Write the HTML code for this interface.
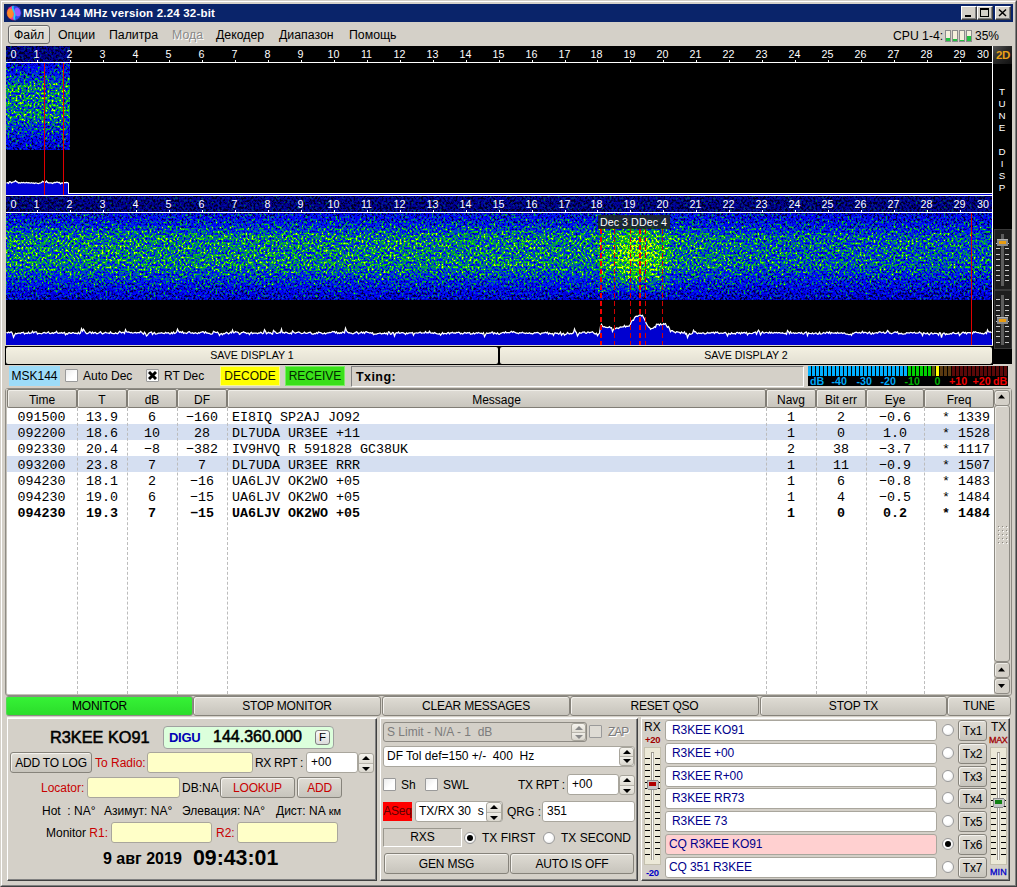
<!DOCTYPE html>
<html><head><meta charset="utf-8"><title>MSHV</title><style>
*{box-sizing:border-box;margin:0;padding:0}
html,body{width:1017px;height:887px;overflow:hidden}
body{background:#d4d0c8;font-family:"Liberation Sans",sans-serif;font-size:12px;color:#000;position:relative}
.a{position:absolute}
.t{position:absolute;white-space:nowrap;line-height:1}
.c{text-align:center}
.btn{position:absolute;letter-spacing:-.2px;border:1px solid #86837b;border-radius:3px;background:linear-gradient(#dfdcd4,#c7c4bc);text-align:center;white-space:nowrap;box-shadow:inset 1px 1px 0 #f4f2ee}
.inp{position:absolute;border:1px solid #a9a69d;border-radius:3px;background:#fff}
.yel{background:#ffffc8}
.red{color:#c80000}
.blu{color:#00008b}
.mono{font-family:"Liberation Mono",monospace;font-size:13.33px}
</style></head><body>
<div class="a" style="left:0;top:0;width:1017px;height:887px;border:1px solid #d4d0c8;border-right-color:#404040;border-bottom-color:#404040"></div>
<div class="a" style="left:1px;top:1px;width:1015px;height:885px;border:1px solid #fff;border-right-color:#808080;border-bottom-color:#808080"></div>
<div class="a" style="left:4px;top:4px;width:1009px;height:18px;background:#0a246a"></div>
<svg class="a" style="left:6px;top:5px" width="16" height="16" viewBox="0 0 16 16"><defs><clipPath id="ic"><circle cx="8" cy="7.9" r="7.5"/></clipPath></defs><g clip-path="url(#ic)"><rect width="16" height="16" fill="#ff2a9c"/><ellipse cx="4.2" cy="8.5" rx="3.4" ry="5" fill="#ff8a2a"/><path d="M7.5 0 C4 4 11 7 8.5 11 C7.5 13 9 16 10 16 L16 16 L16 0 Z" fill="#2a4cf0"/><path d="M7.5 0 C4 4 11 7 8.5 11 C7.5 13 9 16 10 16" fill="none" stroke="#28d0f0" stroke-width="1.8"/><ellipse cx="11.6" cy="7" rx="2.8" ry="4.4" fill="#9a58ff" transform="rotate(-15 11.6 7)"/></g><circle cx="8" cy="7.9" r="7.5" fill="none" stroke="#101848" stroke-width=".6"/></svg>
<div class="t" style="left:23px;top:8px;font-size:11.5px;letter-spacing:.19px;font-weight:bold;color:#fff">MSHV 144 MHz version 2.24 32-bit</div>
<div class="a" style="left:961px;top:6px;width:16px;height:14px;background:#d4d0c8;border:1px solid #fff;border-right-color:#404040;border-bottom-color:#404040;box-shadow:inset -1px -1px 0 #808080"></div>
<div class="a" style="left:977px;top:6px;width:16px;height:14px;background:#d4d0c8;border:1px solid #fff;border-right-color:#404040;border-bottom-color:#404040;box-shadow:inset -1px -1px 0 #808080"></div>
<div class="a" style="left:995px;top:6px;width:16px;height:14px;background:#d4d0c8;border:1px solid #fff;border-right-color:#404040;border-bottom-color:#404040;box-shadow:inset -1px -1px 0 #808080"></div>
<div class="a" style="left:965px;top:15px;width:6px;height:2px;background:#000"></div>
<div class="a" style="left:980px;top:8px;width:9px;height:9px;border:1px solid #000;border-top-width:2px"></div>
<svg class="a" style="left:998px;top:8px" width="10" height="9"><path d="M1 1.5 L8 8 M8 1.5 L1 8" stroke="#000" stroke-width="1.5"/></svg>
<div class="a" style="left:8px;top:25px;width:42px;height:19px;border:1px solid #6a6a6a;border-radius:3px;background:linear-gradient(#e4e1da,#d8d5cd);box-shadow:inset 1px 1px 0 #f0eee8"></div>
<div class="t mi" style="left:14px;top:29px;font-size:12.3px;">Файл</div>
<div class="t mi" style="left:58px;top:29px;font-size:12.3px;">Опции</div>
<div class="t mi" style="left:109px;top:29px;font-size:12.3px;">Палитра</div>
<div class="t mi" style="left:172px;top:29px;font-size:12.3px;color:#8a8a8a;text-shadow:1px 1px 0 #fff;">Мода</div>
<div class="t mi" style="left:216px;top:29px;font-size:12.3px;">Декодер</div>
<div class="t mi" style="left:279px;top:29px;font-size:12.3px;">Диапазон</div>
<div class="t mi" style="left:349px;top:29px;font-size:12.3px;">Помощь</div>
<div class="t" id="cpu" style="left:893px;top:30px;font-size:12.2px">CPU 1-4:</div>
<div class="a" style="left:945px;top:30px;width:6px;height:12px;border:1px solid #8c8c8c;background:#f4efdc"><div class="a" style="left:0;bottom:0;width:4px;height:3px;background:#22c040"></div></div>
<div class="a" style="left:952px;top:30px;width:6px;height:12px;border:1px solid #8c8c8c;background:#f4efdc"><div class="a" style="left:0;bottom:0;width:4px;height:2px;background:#22c040"></div></div>
<div class="a" style="left:959px;top:30px;width:6px;height:12px;border:1px solid #8c8c8c;background:#f4efdc"><div class="a" style="left:0;bottom:0;width:4px;height:1px;background:#22c040"></div></div>
<div class="a" style="left:966px;top:30px;width:6px;height:12px;border:1px solid #8c8c8c;background:#f4efdc"><div class="a" style="left:0;bottom:0;width:4px;height:5px;background:#22c040"></div></div>
<div class="t" style="left:975px;top:30px;font-size:12px">35%</div>
<svg class="a" style="left:0;top:0" width="1017" height="887" viewBox="0 0 1017 887" font-family="Liberation Sans, sans-serif" shape-rendering="crispEdges">
<defs>
<filter id="wf" x="0" y="0" width="100%" height="100%" color-interpolation-filters="sRGB">
<feTurbulence type="fractalNoise" baseFrequency="0.5 0.42" numOctaves="2" seed="7" result="n"/>
<feColorMatrix in="n" type="matrix" values="1.45 0 0 0 -0.225  1.45 0 0 0 -0.225  1.45 0 0 0 -0.225  0 0 0 0 1" result="g"/>
<feComposite in="SourceGraphic" in2="g" operator="arithmetic" k1="0" k2="1" k3="1" k4="-0.5" result="m"/>
<feColorMatrix in="m" type="matrix" values="1 0 0 0 0  1 0 0 0 0  1 0 0 0 0  0 0 0 0 1" result="mm"/>
<feComponentTransfer in="mm">
<feFuncR type="table" tableValues="0 0 0 0 0 0 0 0.05 0.35 0.8 1"/>
<feFuncG type="table" tableValues="0 0 0 0 0.05 0.34 0.62 0.82 0.93 1 1"/>
<feFuncB type="table" tableValues="0.2 0.48 0.78 0.97 1 0.75 0.25 0.02 0 0 0"/>
</feComponentTransfer>
</filter>
<linearGradient id="vg1" x1="0" y1="0" x2="0" y2="1">
<stop offset="0" stop-color="#484848"/><stop offset=".12" stop-color="#626262"/><stop offset=".28" stop-color="#8c8c8c"/><stop offset=".6" stop-color="#8c8c8c"/><stop offset=".8" stop-color="#646464"/><stop offset=".9" stop-color="#4c4c4c"/><stop offset="1" stop-color="#3a3a3a"/>
</linearGradient>
<linearGradient id="hg" x1="0" y1="0" x2="1" y2="0"><stop offset="0" stop-color="#000" stop-opacity="0"/><stop offset=".68" stop-color="#000" stop-opacity="0"/><stop offset=".78" stop-color="#000" stop-opacity=".1"/><stop offset="1" stop-color="#000" stop-opacity=".12"/></linearGradient>
<radialGradient id="hot" cx="0.5" cy="0.45" r="0.5"><stop offset="0" stop-color="#fff" stop-opacity=".42"/><stop offset=".5" stop-color="#fff" stop-opacity=".25"/><stop offset="1" stop-color="#fff" stop-opacity="0"/></radialGradient>
</defs>
<rect x="6" y="46" width="1006" height="318" fill="#000"/>
<g filter="url(#wf)"><rect x="6" y="46" width="64" height="16" fill="#343434"/><rect x="6" y="63" width="64" height="87" fill="url(#vg1)"/></g>
<rect x="6" y="46" width="64" height="16" fill="#000" fill-opacity=".35"/>
<text x="13.5" y="57.6" text-anchor="middle" font-size="10.7" fill="#fff">0</text>
<rect x="37" y="60" width="1" height="2" fill="#fff"/>
<text x="36.5" y="57.6" text-anchor="middle" font-size="10.7" fill="#fff">1</text>
<rect x="70" y="60" width="1" height="2" fill="#fff"/>
<text x="69.5" y="57.6" text-anchor="middle" font-size="10.7" fill="#fff">2</text>
<rect x="103" y="60" width="1" height="2" fill="#fff"/>
<text x="102.5" y="57.6" text-anchor="middle" font-size="10.7" fill="#fff">3</text>
<rect x="136" y="60" width="1" height="2" fill="#fff"/>
<text x="135.5" y="57.6" text-anchor="middle" font-size="10.7" fill="#fff">4</text>
<rect x="169" y="60" width="1" height="2" fill="#fff"/>
<text x="168.5" y="57.6" text-anchor="middle" font-size="10.7" fill="#fff">5</text>
<rect x="202" y="60" width="1" height="2" fill="#fff"/>
<text x="201.5" y="57.6" text-anchor="middle" font-size="10.7" fill="#fff">6</text>
<rect x="235" y="60" width="1" height="2" fill="#fff"/>
<text x="234.5" y="57.6" text-anchor="middle" font-size="10.7" fill="#fff">7</text>
<rect x="268" y="60" width="1" height="2" fill="#fff"/>
<text x="267.5" y="57.6" text-anchor="middle" font-size="10.7" fill="#fff">8</text>
<rect x="301" y="60" width="1" height="2" fill="#fff"/>
<text x="300.5" y="57.6" text-anchor="middle" font-size="10.7" fill="#fff">9</text>
<rect x="334" y="60" width="1" height="2" fill="#fff"/>
<text x="333.5" y="57.6" text-anchor="middle" font-size="10.7" fill="#fff">10</text>
<rect x="367" y="60" width="1" height="2" fill="#fff"/>
<text x="366.5" y="57.6" text-anchor="middle" font-size="10.7" fill="#fff">11</text>
<rect x="400" y="60" width="1" height="2" fill="#fff"/>
<text x="399.5" y="57.6" text-anchor="middle" font-size="10.7" fill="#fff">12</text>
<rect x="433" y="60" width="1" height="2" fill="#fff"/>
<text x="432.5" y="57.6" text-anchor="middle" font-size="10.7" fill="#fff">13</text>
<rect x="466" y="60" width="1" height="2" fill="#fff"/>
<text x="465.5" y="57.6" text-anchor="middle" font-size="10.7" fill="#fff">14</text>
<rect x="499" y="60" width="1" height="2" fill="#fff"/>
<text x="498.5" y="57.6" text-anchor="middle" font-size="10.7" fill="#fff">15</text>
<rect x="532" y="60" width="1" height="2" fill="#fff"/>
<text x="531.5" y="57.6" text-anchor="middle" font-size="10.7" fill="#fff">16</text>
<rect x="565" y="60" width="1" height="2" fill="#fff"/>
<text x="564.5" y="57.6" text-anchor="middle" font-size="10.7" fill="#fff">17</text>
<rect x="597" y="60" width="1" height="2" fill="#fff"/>
<text x="596.5" y="57.6" text-anchor="middle" font-size="10.7" fill="#fff">18</text>
<rect x="630" y="60" width="1" height="2" fill="#fff"/>
<text x="629.5" y="57.6" text-anchor="middle" font-size="10.7" fill="#fff">19</text>
<rect x="663" y="60" width="1" height="2" fill="#fff"/>
<text x="662.5" y="57.6" text-anchor="middle" font-size="10.7" fill="#fff">20</text>
<rect x="696" y="60" width="1" height="2" fill="#fff"/>
<text x="695.5" y="57.6" text-anchor="middle" font-size="10.7" fill="#fff">21</text>
<rect x="729" y="60" width="1" height="2" fill="#fff"/>
<text x="728.5" y="57.6" text-anchor="middle" font-size="10.7" fill="#fff">22</text>
<rect x="762" y="60" width="1" height="2" fill="#fff"/>
<text x="761.5" y="57.6" text-anchor="middle" font-size="10.7" fill="#fff">23</text>
<rect x="795" y="60" width="1" height="2" fill="#fff"/>
<text x="794.5" y="57.6" text-anchor="middle" font-size="10.7" fill="#fff">24</text>
<rect x="828" y="60" width="1" height="2" fill="#fff"/>
<text x="827.5" y="57.6" text-anchor="middle" font-size="10.7" fill="#fff">25</text>
<rect x="861" y="60" width="1" height="2" fill="#fff"/>
<text x="860.5" y="57.6" text-anchor="middle" font-size="10.7" fill="#fff">26</text>
<rect x="894" y="60" width="1" height="2" fill="#fff"/>
<text x="893.5" y="57.6" text-anchor="middle" font-size="10.7" fill="#fff">27</text>
<rect x="927" y="60" width="1" height="2" fill="#fff"/>
<text x="926.5" y="57.6" text-anchor="middle" font-size="10.7" fill="#fff">28</text>
<rect x="960" y="60" width="1" height="2" fill="#fff"/>
<text x="959.5" y="57.6" text-anchor="middle" font-size="10.7" fill="#fff">29</text>
<text x="983" y="57.6" text-anchor="middle" font-size="10.7" fill="#fff">30</text>
<rect x="6" y="62" width="986" height="1" fill="#fff"/>
<path d="M6 195 L6 182.8 L7 182.7 L8 183.4 L9 181.7 L10 181.8 L11 183.0 L12 182.2 L13 181.8 L14 181.6 L15 180.6 L16 181.7 L17 182.1 L18 183.0 L19 182.7 L20 183.0 L21 182.5 L22 182.8 L23 182.5 L24 182.8 L25 182.9 L26 182.4 L27 182.9 L28 182.6 L29 182.9 L30 183.2 L31 182.7 L32 183.2 L33 182.9 L34 183.5 L35 182.9 L36 183.0 L37 183.4 L38 183.5 L39 183.2 L40 183.0 L41 182.6 L42 181.3 L43 181.7 L44 182.2 L45 182.4 L46 181.1 L47 182.4 L48 182.9 L49 182.9 L50 182.9 L51 182.9 L52 183.5 L53 182.8 L54 182.4 L55 182.6 L56 182.2 L57 182.1 L58 182.6 L59 182.5 L60 183.9 L61 183.1 L62 182.8 L63 183.1 L64 182.7 L65 182.6 L66 182.5 L67 182.6 L69 183 L69 195 Z" fill="#0000d4"/>
<path d="M6.5 182.8 L7.5 182.7 L8.5 183.4 L9.5 181.7 L10.5 181.8 L11.5 183.0 L12.5 182.2 L13.5 181.8 L14.5 181.6 L15.5 180.6 L16.5 181.7 L17.5 182.1 L18.5 183.0 L19.5 182.7 L20.5 183.0 L21.5 182.5 L22.5 182.8 L23.5 182.5 L24.5 182.8 L25.5 182.9 L26.5 182.4 L27.5 182.9 L28.5 182.6 L29.5 182.9 L30.5 183.2 L31.5 182.7 L32.5 183.2 L33.5 182.9 L34.5 183.5 L35.5 182.9 L36.5 183.0 L37.5 183.4 L38.5 183.5 L39.5 183.2 L40.5 183.0 L41.5 182.6 L42.5 181.3 L43.5 181.7 L44.5 182.2 L45.5 182.4 L46.5 181.1 L47.5 182.4 L48.5 182.9 L49.5 182.9 L50.5 182.9 L51.5 182.9 L52.5 183.5 L53.5 182.8 L54.5 182.4 L55.5 182.6 L56.5 182.2 L57.5 182.1 L58.5 182.6 L59.5 182.5 L60.5 183.9 L61.5 183.1 L62.5 182.8 L63.5 183.1 L64.5 182.7 L65.5 182.6 L66.5 182.5 L67.5 182.6 L68.5 183" fill="none" stroke="#fff" stroke-width="1.25" shape-rendering="auto"/>
<rect x="68" y="183" width="1" height="11" fill="#fff"/><rect x="68" y="193" width="924" height="1" fill="#fff"/>
<rect x="6" y="194" width="986" height="1" fill="#0000d4"/>
<rect x="44" y="63" width="1" height="132" fill="#e00000"/><rect x="63" y="63" width="1" height="132" fill="#e00000"/>
<rect x="6" y="195" width="986" height="1" fill="#fff"/>
<rect x="992" y="46" width="1" height="300" fill="#fff"/>
<g filter="url(#wf)"><rect x="6" y="196" width="986" height="16" fill="#343434"/><rect x="6" y="213" width="986" height="87" fill="url(#vg1)"/><rect x="6" y="213" width="986" height="87" fill="url(#hg)"/><rect x="599" y="228" width="71" height="64" fill="#fff" fill-opacity=".16"/><rect x="604" y="226" width="66" height="68" fill="url(#hot)"/></g>
<rect x="6" y="196" width="986" height="16" fill="#000" fill-opacity=".35"/>
<text x="13.5" y="207.6" text-anchor="middle" font-size="10.7" fill="#fff">0</text>
<rect x="37" y="210" width="1" height="2" fill="#fff"/>
<text x="36.5" y="207.6" text-anchor="middle" font-size="10.7" fill="#fff">1</text>
<rect x="70" y="210" width="1" height="2" fill="#fff"/>
<text x="69.5" y="207.6" text-anchor="middle" font-size="10.7" fill="#fff">2</text>
<rect x="103" y="210" width="1" height="2" fill="#fff"/>
<text x="102.5" y="207.6" text-anchor="middle" font-size="10.7" fill="#fff">3</text>
<rect x="136" y="210" width="1" height="2" fill="#fff"/>
<text x="135.5" y="207.6" text-anchor="middle" font-size="10.7" fill="#fff">4</text>
<rect x="169" y="210" width="1" height="2" fill="#fff"/>
<text x="168.5" y="207.6" text-anchor="middle" font-size="10.7" fill="#fff">5</text>
<rect x="202" y="210" width="1" height="2" fill="#fff"/>
<text x="201.5" y="207.6" text-anchor="middle" font-size="10.7" fill="#fff">6</text>
<rect x="235" y="210" width="1" height="2" fill="#fff"/>
<text x="234.5" y="207.6" text-anchor="middle" font-size="10.7" fill="#fff">7</text>
<rect x="268" y="210" width="1" height="2" fill="#fff"/>
<text x="267.5" y="207.6" text-anchor="middle" font-size="10.7" fill="#fff">8</text>
<rect x="301" y="210" width="1" height="2" fill="#fff"/>
<text x="300.5" y="207.6" text-anchor="middle" font-size="10.7" fill="#fff">9</text>
<rect x="334" y="210" width="1" height="2" fill="#fff"/>
<text x="333.5" y="207.6" text-anchor="middle" font-size="10.7" fill="#fff">10</text>
<rect x="367" y="210" width="1" height="2" fill="#fff"/>
<text x="366.5" y="207.6" text-anchor="middle" font-size="10.7" fill="#fff">11</text>
<rect x="400" y="210" width="1" height="2" fill="#fff"/>
<text x="399.5" y="207.6" text-anchor="middle" font-size="10.7" fill="#fff">12</text>
<rect x="433" y="210" width="1" height="2" fill="#fff"/>
<text x="432.5" y="207.6" text-anchor="middle" font-size="10.7" fill="#fff">13</text>
<rect x="466" y="210" width="1" height="2" fill="#fff"/>
<text x="465.5" y="207.6" text-anchor="middle" font-size="10.7" fill="#fff">14</text>
<rect x="499" y="210" width="1" height="2" fill="#fff"/>
<text x="498.5" y="207.6" text-anchor="middle" font-size="10.7" fill="#fff">15</text>
<rect x="532" y="210" width="1" height="2" fill="#fff"/>
<text x="531.5" y="207.6" text-anchor="middle" font-size="10.7" fill="#fff">16</text>
<rect x="565" y="210" width="1" height="2" fill="#fff"/>
<text x="564.5" y="207.6" text-anchor="middle" font-size="10.7" fill="#fff">17</text>
<rect x="597" y="210" width="1" height="2" fill="#fff"/>
<text x="596.5" y="207.6" text-anchor="middle" font-size="10.7" fill="#fff">18</text>
<rect x="630" y="210" width="1" height="2" fill="#fff"/>
<text x="629.5" y="207.6" text-anchor="middle" font-size="10.7" fill="#fff">19</text>
<rect x="663" y="210" width="1" height="2" fill="#fff"/>
<text x="662.5" y="207.6" text-anchor="middle" font-size="10.7" fill="#fff">20</text>
<rect x="696" y="210" width="1" height="2" fill="#fff"/>
<text x="695.5" y="207.6" text-anchor="middle" font-size="10.7" fill="#fff">21</text>
<rect x="729" y="210" width="1" height="2" fill="#fff"/>
<text x="728.5" y="207.6" text-anchor="middle" font-size="10.7" fill="#fff">22</text>
<rect x="762" y="210" width="1" height="2" fill="#fff"/>
<text x="761.5" y="207.6" text-anchor="middle" font-size="10.7" fill="#fff">23</text>
<rect x="795" y="210" width="1" height="2" fill="#fff"/>
<text x="794.5" y="207.6" text-anchor="middle" font-size="10.7" fill="#fff">24</text>
<rect x="828" y="210" width="1" height="2" fill="#fff"/>
<text x="827.5" y="207.6" text-anchor="middle" font-size="10.7" fill="#fff">25</text>
<rect x="861" y="210" width="1" height="2" fill="#fff"/>
<text x="860.5" y="207.6" text-anchor="middle" font-size="10.7" fill="#fff">26</text>
<rect x="894" y="210" width="1" height="2" fill="#fff"/>
<text x="893.5" y="207.6" text-anchor="middle" font-size="10.7" fill="#fff">27</text>
<rect x="927" y="210" width="1" height="2" fill="#fff"/>
<text x="926.5" y="207.6" text-anchor="middle" font-size="10.7" fill="#fff">28</text>
<rect x="960" y="210" width="1" height="2" fill="#fff"/>
<text x="959.5" y="207.6" text-anchor="middle" font-size="10.7" fill="#fff">29</text>
<text x="983" y="207.6" text-anchor="middle" font-size="10.7" fill="#fff">30</text>
<rect x="6" y="212" width="986" height="1" fill="#fff"/>
<path d="M6 345 L6 332.2 L7 333.0 L8 332.1 L9 332.7 L10 332.1 L11 331.9 L12 333.7 L13 337.2 L14 335.2 L15 333.4 L16 333.9 L17 333.4 L18 333.1 L19 333.2 L20 333.5 L21 332.5 L22 332.5 L23 332.2 L24 334.0 L25 333.3 L26 333.2 L27 333.6 L28 332.1 L29 333.5 L30 333.2 L31 333.0 L32 331.2 L33 332.8 L34 332.2 L35 331.9 L36 331.8 L37 334.1 L38 333.3 L39 333.4 L40 333.5 L41 333.9 L42 333.2 L43 332.7 L44 332.5 L45 333.1 L46 333.2 L47 332.5 L48 331.8 L49 333.5 L50 333.6 L51 333.1 L52 332.8 L53 333.4 L54 332.7 L55 332.7 L56 331.3 L57 333.0 L58 333.3 L59 332.8 L60 333.1 L61 332.6 L62 333.3 L63 332.9 L64 332.4 L65 334.8 L66 333.6 L67 334.2 L68 332.9 L69 332.7 L70 333.3 L71 333.3 L72 332.7 L73 332.6 L74 333.4 L75 333.2 L76 333.3 L77 333.7 L78 332.3 L79 333.8 L80 332.9 L81 328.8 L82 331.1 L83 329.2 L84 330.8 L85 332.5 L86 333.6 L87 333.6 L88 333.1 L89 332.0 L90 332.1 L91 333.5 L92 332.1 L93 333.3 L94 332.6 L95 332.4 L96 333.7 L97 333.7 L98 333.1 L99 332.4 L100 331.6 L101 333.1 L102 333.9 L103 333.4 L104 332.9 L105 332.2 L106 332.8 L107 333.0 L108 333.1 L109 333.4 L110 331.8 L111 333.1 L112 333.3 L113 333.7 L114 333.7 L115 332.8 L116 333.4 L117 333.7 L118 332.8 L119 331.4 L120 332.0 L121 332.9 L122 332.4 L123 332.3 L124 333.5 L125 329.7 L126 331.8 L127 332.2 L128 331.9 L129 332.3 L130 332.9 L131 332.4 L132 333.2 L133 333.0 L134 332.6 L135 332.4 L136 333.0 L137 332.6 L138 332.7 L139 332.9 L140 331.4 L141 332.1 L142 333.4 L143 334.2 L144 332.2 L145 333.5 L146 336.0 L147 335.2 L148 333.4 L149 332.8 L150 332.3 L151 332.0 L152 334.5 L153 333.2 L154 332.4 L155 334.1 L156 334.0 L157 333.6 L158 333.0 L159 333.0 L160 333.1 L161 332.7 L162 333.1 L163 333.3 L164 333.6 L165 332.3 L166 333.1 L167 332.9 L168 332.7 L169 333.9 L170 333.8 L171 332.5 L172 333.7 L173 332.0 L174 333.5 L175 333.0 L176 332.2 L177 329.2 L178 331.2 L179 332.4 L180 331.8 L181 332.7 L182 331.5 L183 333.4 L184 332.8 L185 333.0 L186 333.6 L187 332.7 L188 331.8 L189 331.6 L190 333.0 L191 333.1 L192 332.7 L193 333.5 L194 333.1 L195 332.7 L196 333.2 L197 333.8 L198 332.6 L199 333.3 L200 332.4 L201 332.1 L202 331.7 L203 331.8 L204 333.2 L205 331.7 L206 333.0 L207 332.8 L208 333.3 L209 333.4 L210 334.2 L211 334.1 L212 333.8 L213 331.3 L214 331.9 L215 332.4 L216 332.6 L217 332.0 L218 333.3 L219 335.4 L220 334.0 L221 333.6 L222 334.7 L223 333.4 L224 333.8 L225 333.0 L226 332.2 L227 332.9 L228 334.0 L229 333.4 L230 332.1 L231 333.0 L232 330.1 L233 332.8 L234 332.6 L235 331.6 L236 332.0 L237 332.2 L238 332.7 L239 334.4 L240 333.7 L241 332.6 L242 332.5 L243 331.8 L244 332.6 L245 332.6 L246 333.5 L247 333.2 L248 333.2 L249 334.6 L250 333.0 L251 332.3 L252 333.7 L253 333.2 L254 333.2 L255 333.0 L256 333.0 L257 333.7 L258 333.0 L259 333.2 L260 332.3 L261 332.6 L262 333.8 L263 333.2 L264 329.8 L265 331.4 L266 333.8 L267 333.0 L268 332.3 L269 333.1 L270 332.7 L271 333.7 L272 334.1 L273 330.5 L274 331.5 L275 332.1 L276 333.3 L277 333.3 L278 333.0 L279 332.4 L280 332.7 L281 329.1 L282 332.8 L283 332.5 L284 333.2 L285 332.2 L286 332.3 L287 332.9 L288 333.5 L289 333.6 L290 333.1 L291 333.9 L292 331.0 L293 332.0 L294 332.7 L295 333.2 L296 332.6 L297 332.4 L298 332.0 L299 332.4 L300 333.0 L301 333.5 L302 333.3 L303 333.0 L304 332.2 L305 333.2 L306 333.3 L307 333.2 L308 332.6 L309 332.4 L310 332.2 L311 333.7 L312 334.1 L313 334.1 L314 333.5 L315 333.8 L316 332.6 L317 333.6 L318 332.1 L319 332.4 L320 332.6 L321 333.1 L322 333.8 L323 333.7 L324 332.9 L325 334.0 L326 333.2 L327 332.8 L328 332.8 L329 332.4 L330 332.7 L331 332.3 L332 331.4 L333 331.9 L334 331.6 L335 333.0 L336 331.8 L337 333.5 L338 332.8 L339 333.4 L340 332.8 L341 333.2 L342 331.9 L343 332.3 L344 332.9 L345 328.2 L346 330.8 L347 332.1 L348 332.8 L349 332.7 L350 333.2 L351 333.2 L352 333.9 L353 333.7 L354 332.9 L355 332.6 L356 331.8 L357 332.5 L358 333.8 L359 333.0 L360 332.8 L361 331.9 L362 333.1 L363 332.2 L364 333.4 L365 331.9 L366 331.7 L367 332.4 L368 332.5 L369 333.0 L370 332.7 L371 333.2 L372 332.6 L373 334.6 L374 334.2 L375 334.0 L376 334.0 L377 333.6 L378 333.5 L379 333.2 L380 333.2 L381 334.1 L382 333.5 L383 333.7 L384 332.9 L385 333.7 L386 333.1 L387 334.4 L388 331.8 L389 332.2 L390 334.3 L391 333.9 L392 332.5 L393 332.7 L394 336.0 L395 333.5 L396 332.7 L397 333.1 L398 332.0 L399 333.3 L400 333.2 L401 332.7 L402 332.7 L403 332.9 L404 333.4 L405 334.5 L406 332.9 L407 333.7 L408 333.1 L409 332.8 L410 332.8 L411 332.9 L412 332.5 L413 335.2 L414 333.3 L415 333.0 L416 332.9 L417 333.2 L418 332.9 L419 332.4 L420 332.2 L421 333.2 L422 333.0 L423 332.9 L424 333.0 L425 331.5 L426 332.8 L427 332.7 L428 332.9 L429 331.3 L430 332.9 L431 333.2 L432 332.9 L433 333.4 L434 332.5 L435 333.1 L436 333.7 L437 333.9 L438 334.0 L439 333.5 L440 335.1 L441 334.0 L442 332.6 L443 333.9 L444 333.4 L445 333.5 L446 334.0 L447 332.8 L448 332.5 L449 333.9 L450 332.8 L451 332.8 L452 332.2 L453 333.1 L454 332.9 L455 333.3 L456 332.5 L457 332.7 L458 332.1 L459 332.6 L460 333.9 L461 333.3 L462 334.0 L463 333.5 L464 332.5 L465 332.9 L466 333.3 L467 332.7 L468 332.9 L469 332.5 L470 334.2 L471 333.9 L472 333.8 L473 332.9 L474 334.0 L475 333.3 L476 332.8 L477 333.3 L478 332.4 L479 333.0 L480 333.4 L481 333.1 L482 333.8 L483 332.7 L484 336.6 L485 334.7 L486 333.0 L487 333.3 L488 333.3 L489 333.0 L490 333.2 L491 332.4 L492 332.0 L493 333.9 L494 332.8 L495 333.2 L496 333.9 L497 332.7 L498 334.1 L499 334.4 L500 333.3 L501 333.2 L502 332.5 L503 332.4 L504 333.2 L505 331.7 L506 332.9 L507 332.6 L508 332.6 L509 332.9 L510 332.1 L511 331.4 L512 332.4 L513 331.5 L514 332.2 L515 332.6 L516 333.1 L517 333.2 L518 333.7 L519 332.6 L520 332.9 L521 332.8 L522 332.2 L523 333.0 L524 333.1 L525 333.6 L526 333.0 L527 333.3 L528 333.4 L529 332.8 L530 333.5 L531 333.4 L532 334.0 L533 333.4 L534 332.6 L535 332.8 L536 332.6 L537 332.4 L538 332.7 L539 333.6 L540 334.3 L541 333.1 L542 333.2 L543 332.8 L544 332.8 L545 332.2 L546 333.0 L547 332.2 L548 334.2 L549 333.1 L550 333.7 L551 333.9 L552 333.5 L553 335.4 L554 333.1 L555 332.9 L556 333.4 L557 333.1 L558 334.2 L559 333.6 L560 332.1 L561 335.1 L562 333.8 L563 333.3 L564 335.2 L565 334.3 L566 334.0 L567 332.5 L568 333.4 L569 334.1 L570 333.4 L571 333.8 L572 333.4 L573 332.6 L574 328.9 L575 331.4 L576 332.8 L577 336.0 L578 334.2 L579 332.6 L580 333.2 L581 333.1 L582 332.1 L583 332.2 L584 331.9 L585 333.1 L586 333.3 L587 332.0 L588 332.0 L589 332.7 L590 332.4 L591 332.1 L592 331.7 L593 332.8 L594 333.7 L595 334.0 L596 333.3 L597 335.6 L598 334.1 L599 333.1 L600 326.4 L601 324.3 L602 326.2 L603 326.9 L604 326.6 L605 327.3 L606 327.3 L607 327.6 L608 327.4 L609 326.7 L610 327.8 L611 327.7 L612 331.5 L613 329.5 L614 328.6 L615 328.6 L616 328.0 L617 328.2 L618 328.5 L619 327.5 L620 326.9 L621 327.0 L622 326.8 L623 326.8 L624 325.4 L625 327.0 L626 326.2 L627 326.4 L628 326.2 L629 326.0 L630 324.0 L631 321.4 L632 320.2 L633 320.3 L634 317.8 L635 316.5 L636 316.2 L637 316.4 L638 315.8 L639 315.2 L640 315.1 L641 315.9 L642 315.3 L643 317.4 L644 319.2 L645 321.4 L646 323.9 L647 325.5 L648 327.0 L649 327.3 L650 329.3 L651 328.5 L652 328.3 L653 327.9 L654 326.7 L655 327.3 L656 324.2 L657 324.4 L658 324.2 L659 325.5 L660 323.8 L661 324.8 L662 325.2 L663 323.7 L664 324.3 L665 323.6 L666 325.9 L667 327.3 L668 326.5 L669 328.7 L670 331.8 L671 330.7 L672 330.7 L673 331.7 L674 332.0 L675 332.9 L676 331.6 L677 331.8 L678 332.2 L679 332.3 L680 333.4 L681 331.9 L682 333.0 L683 333.1 L684 331.9 L685 334.1 L686 333.5 L687 337.5 L688 335.2 L689 333.7 L690 334.3 L691 334.0 L692 333.4 L693 330.2 L694 331.8 L695 331.7 L696 333.1 L697 333.8 L698 332.9 L699 333.4 L700 333.1 L701 333.5 L702 332.8 L703 332.9 L704 333.8 L705 333.9 L706 333.4 L707 332.4 L708 333.0 L709 332.8 L710 333.1 L711 332.4 L712 332.7 L713 332.3 L714 333.5 L715 332.1 L716 332.5 L717 332.0 L718 333.1 L719 333.5 L720 333.2 L721 333.2 L722 333.4 L723 333.1 L724 332.6 L725 332.4 L726 333.8 L727 336.0 L728 333.4 L729 333.8 L730 334.3 L731 332.7 L732 333.5 L733 333.5 L734 333.3 L735 334.1 L736 332.5 L737 332.4 L738 333.3 L739 332.6 L740 334.0 L741 332.5 L742 333.2 L743 332.7 L744 332.4 L745 333.2 L746 332.3 L747 334.9 L748 333.5 L749 333.1 L750 333.5 L751 333.6 L752 333.4 L753 332.5 L754 332.3 L755 332.0 L756 334.1 L757 331.7 L758 330.2 L759 331.7 L760 334.8 L761 333.1 L762 331.7 L763 332.9 L764 333.0 L765 332.5 L766 332.3 L767 332.8 L768 333.3 L769 332.0 L770 333.1 L771 332.4 L772 333.2 L773 333.1 L774 332.5 L775 332.8 L776 332.4 L777 333.0 L778 332.6 L779 332.6 L780 333.2 L781 333.2 L782 332.8 L783 333.3 L784 333.7 L785 333.3 L786 334.3 L787 330.6 L788 331.8 L789 333.6 L790 331.7 L791 333.3 L792 333.0 L793 332.6 L794 333.4 L795 332.9 L796 333.4 L797 333.1 L798 332.7 L799 332.6 L800 333.4 L801 332.4 L802 333.8 L803 334.1 L804 333.0 L805 332.4 L806 332.1 L807 335.6 L808 332.9 L809 333.3 L810 333.5 L811 333.8 L812 332.8 L813 333.9 L814 333.5 L815 332.9 L816 333.1 L817 334.3 L818 333.9 L819 332.2 L820 334.0 L821 333.8 L822 333.5 L823 332.5 L824 333.0 L825 333.5 L826 332.1 L827 332.3 L828 333.2 L829 331.8 L830 333.6 L831 332.5 L832 333.0 L833 333.1 L834 333.2 L835 332.8 L836 333.5 L837 332.4 L838 333.3 L839 333.0 L840 333.0 L841 332.6 L842 333.5 L843 333.2 L844 332.9 L845 333.9 L846 334.0 L847 334.0 L848 334.5 L849 334.5 L850 334.2 L851 335.4 L852 333.3 L853 333.5 L854 332.7 L855 332.4 L856 332.1 L857 332.9 L858 332.8 L859 332.5 L860 333.2 L861 332.7 L862 331.4 L863 333.0 L864 332.4 L865 332.4 L866 332.7 L867 333.6 L868 332.8 L869 332.0 L870 333.7 L871 334.2 L872 332.7 L873 333.9 L874 333.0 L875 332.9 L876 332.6 L877 333.3 L878 332.3 L879 331.6 L880 332.0 L881 332.8 L882 332.5 L883 332.1 L884 333.4 L885 333.1 L886 332.3 L887 330.6 L888 331.5 L889 333.1 L890 333.2 L891 333.7 L892 333.2 L893 332.8 L894 332.2 L895 332.0 L896 332.6 L897 331.7 L898 333.9 L899 333.4 L900 333.7 L901 333.3 L902 334.0 L903 334.0 L904 333.9 L905 333.9 L906 332.7 L907 332.9 L908 332.8 L909 333.0 L910 332.3 L911 332.5 L912 333.1 L913 332.7 L914 332.2 L915 333.3 L916 333.0 L917 333.0 L918 332.9 L919 331.9 L920 333.0 L921 333.1 L922 335.6 L923 332.8 L924 333.1 L925 333.8 L926 333.6 L927 332.9 L928 334.2 L929 334.8 L930 333.2 L931 332.7 L932 333.9 L933 333.9 L934 333.1 L935 333.3 L936 333.4 L937 333.7 L938 335.1 L939 332.7 L940 333.0 L941 337.5 L942 334.1 L943 333.2 L944 333.1 L945 334.7 L946 333.8 L947 334.3 L948 334.2 L949 334.1 L950 333.5 L951 334.0 L952 332.9 L953 332.5 L954 333.4 L955 333.5 L956 333.5 L957 333.2 L958 332.5 L959 335.5 L960 334.1 L961 333.5 L962 332.4 L963 332.2 L964 333.1 L965 332.4 L966 333.9 L967 332.6 L968 332.7 L969 332.6 L970 333.1 L971 332.4 L972 333.7 L973 331.8 L974 332.4 L975 331.8 L976 332.5 L977 332.6 L978 332.7 L979 333.2 L980 333.0 L981 333.7 L982 333.5 L983 334.1 L984 333.6 L985 332.4 L986 333.5 L987 329.9 L988 331.7 L989 332.1 L990 331.9 L991 332.9 L992 345 Z" fill="#0000d0"/>
<path d="M6.5 332.2 L7.5 333.0 L8.5 332.1 L9.5 332.7 L10.5 332.1 L11.5 331.9 L12.5 333.7 L13.5 337.2 L14.5 335.2 L15.5 333.4 L16.5 333.9 L17.5 333.4 L18.5 333.1 L19.5 333.2 L20.5 333.5 L21.5 332.5 L22.5 332.5 L23.5 332.2 L24.5 334.0 L25.5 333.3 L26.5 333.2 L27.5 333.6 L28.5 332.1 L29.5 333.5 L30.5 333.2 L31.5 333.0 L32.5 331.2 L33.5 332.8 L34.5 332.2 L35.5 331.9 L36.5 331.8 L37.5 334.1 L38.5 333.3 L39.5 333.4 L40.5 333.5 L41.5 333.9 L42.5 333.2 L43.5 332.7 L44.5 332.5 L45.5 333.1 L46.5 333.2 L47.5 332.5 L48.5 331.8 L49.5 333.5 L50.5 333.6 L51.5 333.1 L52.5 332.8 L53.5 333.4 L54.5 332.7 L55.5 332.7 L56.5 331.3 L57.5 333.0 L58.5 333.3 L59.5 332.8 L60.5 333.1 L61.5 332.6 L62.5 333.3 L63.5 332.9 L64.5 332.4 L65.5 334.8 L66.5 333.6 L67.5 334.2 L68.5 332.9 L69.5 332.7 L70.5 333.3 L71.5 333.3 L72.5 332.7 L73.5 332.6 L74.5 333.4 L75.5 333.2 L76.5 333.3 L77.5 333.7 L78.5 332.3 L79.5 333.8 L80.5 332.9 L81.5 328.8 L82.5 331.1 L83.5 329.2 L84.5 330.8 L85.5 332.5 L86.5 333.6 L87.5 333.6 L88.5 333.1 L89.5 332.0 L90.5 332.1 L91.5 333.5 L92.5 332.1 L93.5 333.3 L94.5 332.6 L95.5 332.4 L96.5 333.7 L97.5 333.7 L98.5 333.1 L99.5 332.4 L100.5 331.6 L101.5 333.1 L102.5 333.9 L103.5 333.4 L104.5 332.9 L105.5 332.2 L106.5 332.8 L107.5 333.0 L108.5 333.1 L109.5 333.4 L110.5 331.8 L111.5 333.1 L112.5 333.3 L113.5 333.7 L114.5 333.7 L115.5 332.8 L116.5 333.4 L117.5 333.7 L118.5 332.8 L119.5 331.4 L120.5 332.0 L121.5 332.9 L122.5 332.4 L123.5 332.3 L124.5 333.5 L125.5 329.7 L126.5 331.8 L127.5 332.2 L128.5 331.9 L129.5 332.3 L130.5 332.9 L131.5 332.4 L132.5 333.2 L133.5 333.0 L134.5 332.6 L135.5 332.4 L136.5 333.0 L137.5 332.6 L138.5 332.7 L139.5 332.9 L140.5 331.4 L141.5 332.1 L142.5 333.4 L143.5 334.2 L144.5 332.2 L145.5 333.5 L146.5 336.0 L147.5 335.2 L148.5 333.4 L149.5 332.8 L150.5 332.3 L151.5 332.0 L152.5 334.5 L153.5 333.2 L154.5 332.4 L155.5 334.1 L156.5 334.0 L157.5 333.6 L158.5 333.0 L159.5 333.0 L160.5 333.1 L161.5 332.7 L162.5 333.1 L163.5 333.3 L164.5 333.6 L165.5 332.3 L166.5 333.1 L167.5 332.9 L168.5 332.7 L169.5 333.9 L170.5 333.8 L171.5 332.5 L172.5 333.7 L173.5 332.0 L174.5 333.5 L175.5 333.0 L176.5 332.2 L177.5 329.2 L178.5 331.2 L179.5 332.4 L180.5 331.8 L181.5 332.7 L182.5 331.5 L183.5 333.4 L184.5 332.8 L185.5 333.0 L186.5 333.6 L187.5 332.7 L188.5 331.8 L189.5 331.6 L190.5 333.0 L191.5 333.1 L192.5 332.7 L193.5 333.5 L194.5 333.1 L195.5 332.7 L196.5 333.2 L197.5 333.8 L198.5 332.6 L199.5 333.3 L200.5 332.4 L201.5 332.1 L202.5 331.7 L203.5 331.8 L204.5 333.2 L205.5 331.7 L206.5 333.0 L207.5 332.8 L208.5 333.3 L209.5 333.4 L210.5 334.2 L211.5 334.1 L212.5 333.8 L213.5 331.3 L214.5 331.9 L215.5 332.4 L216.5 332.6 L217.5 332.0 L218.5 333.3 L219.5 335.4 L220.5 334.0 L221.5 333.6 L222.5 334.7 L223.5 333.4 L224.5 333.8 L225.5 333.0 L226.5 332.2 L227.5 332.9 L228.5 334.0 L229.5 333.4 L230.5 332.1 L231.5 333.0 L232.5 330.1 L233.5 332.8 L234.5 332.6 L235.5 331.6 L236.5 332.0 L237.5 332.2 L238.5 332.7 L239.5 334.4 L240.5 333.7 L241.5 332.6 L242.5 332.5 L243.5 331.8 L244.5 332.6 L245.5 332.6 L246.5 333.5 L247.5 333.2 L248.5 333.2 L249.5 334.6 L250.5 333.0 L251.5 332.3 L252.5 333.7 L253.5 333.2 L254.5 333.2 L255.5 333.0 L256.5 333.0 L257.5 333.7 L258.5 333.0 L259.5 333.2 L260.5 332.3 L261.5 332.6 L262.5 333.8 L263.5 333.2 L264.5 329.8 L265.5 331.4 L266.5 333.8 L267.5 333.0 L268.5 332.3 L269.5 333.1 L270.5 332.7 L271.5 333.7 L272.5 334.1 L273.5 330.5 L274.5 331.5 L275.5 332.1 L276.5 333.3 L277.5 333.3 L278.5 333.0 L279.5 332.4 L280.5 332.7 L281.5 329.1 L282.5 332.8 L283.5 332.5 L284.5 333.2 L285.5 332.2 L286.5 332.3 L287.5 332.9 L288.5 333.5 L289.5 333.6 L290.5 333.1 L291.5 333.9 L292.5 331.0 L293.5 332.0 L294.5 332.7 L295.5 333.2 L296.5 332.6 L297.5 332.4 L298.5 332.0 L299.5 332.4 L300.5 333.0 L301.5 333.5 L302.5 333.3 L303.5 333.0 L304.5 332.2 L305.5 333.2 L306.5 333.3 L307.5 333.2 L308.5 332.6 L309.5 332.4 L310.5 332.2 L311.5 333.7 L312.5 334.1 L313.5 334.1 L314.5 333.5 L315.5 333.8 L316.5 332.6 L317.5 333.6 L318.5 332.1 L319.5 332.4 L320.5 332.6 L321.5 333.1 L322.5 333.8 L323.5 333.7 L324.5 332.9 L325.5 334.0 L326.5 333.2 L327.5 332.8 L328.5 332.8 L329.5 332.4 L330.5 332.7 L331.5 332.3 L332.5 331.4 L333.5 331.9 L334.5 331.6 L335.5 333.0 L336.5 331.8 L337.5 333.5 L338.5 332.8 L339.5 333.4 L340.5 332.8 L341.5 333.2 L342.5 331.9 L343.5 332.3 L344.5 332.9 L345.5 328.2 L346.5 330.8 L347.5 332.1 L348.5 332.8 L349.5 332.7 L350.5 333.2 L351.5 333.2 L352.5 333.9 L353.5 333.7 L354.5 332.9 L355.5 332.6 L356.5 331.8 L357.5 332.5 L358.5 333.8 L359.5 333.0 L360.5 332.8 L361.5 331.9 L362.5 333.1 L363.5 332.2 L364.5 333.4 L365.5 331.9 L366.5 331.7 L367.5 332.4 L368.5 332.5 L369.5 333.0 L370.5 332.7 L371.5 333.2 L372.5 332.6 L373.5 334.6 L374.5 334.2 L375.5 334.0 L376.5 334.0 L377.5 333.6 L378.5 333.5 L379.5 333.2 L380.5 333.2 L381.5 334.1 L382.5 333.5 L383.5 333.7 L384.5 332.9 L385.5 333.7 L386.5 333.1 L387.5 334.4 L388.5 331.8 L389.5 332.2 L390.5 334.3 L391.5 333.9 L392.5 332.5 L393.5 332.7 L394.5 336.0 L395.5 333.5 L396.5 332.7 L397.5 333.1 L398.5 332.0 L399.5 333.3 L400.5 333.2 L401.5 332.7 L402.5 332.7 L403.5 332.9 L404.5 333.4 L405.5 334.5 L406.5 332.9 L407.5 333.7 L408.5 333.1 L409.5 332.8 L410.5 332.8 L411.5 332.9 L412.5 332.5 L413.5 335.2 L414.5 333.3 L415.5 333.0 L416.5 332.9 L417.5 333.2 L418.5 332.9 L419.5 332.4 L420.5 332.2 L421.5 333.2 L422.5 333.0 L423.5 332.9 L424.5 333.0 L425.5 331.5 L426.5 332.8 L427.5 332.7 L428.5 332.9 L429.5 331.3 L430.5 332.9 L431.5 333.2 L432.5 332.9 L433.5 333.4 L434.5 332.5 L435.5 333.1 L436.5 333.7 L437.5 333.9 L438.5 334.0 L439.5 333.5 L440.5 335.1 L441.5 334.0 L442.5 332.6 L443.5 333.9 L444.5 333.4 L445.5 333.5 L446.5 334.0 L447.5 332.8 L448.5 332.5 L449.5 333.9 L450.5 332.8 L451.5 332.8 L452.5 332.2 L453.5 333.1 L454.5 332.9 L455.5 333.3 L456.5 332.5 L457.5 332.7 L458.5 332.1 L459.5 332.6 L460.5 333.9 L461.5 333.3 L462.5 334.0 L463.5 333.5 L464.5 332.5 L465.5 332.9 L466.5 333.3 L467.5 332.7 L468.5 332.9 L469.5 332.5 L470.5 334.2 L471.5 333.9 L472.5 333.8 L473.5 332.9 L474.5 334.0 L475.5 333.3 L476.5 332.8 L477.5 333.3 L478.5 332.4 L479.5 333.0 L480.5 333.4 L481.5 333.1 L482.5 333.8 L483.5 332.7 L484.5 336.6 L485.5 334.7 L486.5 333.0 L487.5 333.3 L488.5 333.3 L489.5 333.0 L490.5 333.2 L491.5 332.4 L492.5 332.0 L493.5 333.9 L494.5 332.8 L495.5 333.2 L496.5 333.9 L497.5 332.7 L498.5 334.1 L499.5 334.4 L500.5 333.3 L501.5 333.2 L502.5 332.5 L503.5 332.4 L504.5 333.2 L505.5 331.7 L506.5 332.9 L507.5 332.6 L508.5 332.6 L509.5 332.9 L510.5 332.1 L511.5 331.4 L512.5 332.4 L513.5 331.5 L514.5 332.2 L515.5 332.6 L516.5 333.1 L517.5 333.2 L518.5 333.7 L519.5 332.6 L520.5 332.9 L521.5 332.8 L522.5 332.2 L523.5 333.0 L524.5 333.1 L525.5 333.6 L526.5 333.0 L527.5 333.3 L528.5 333.4 L529.5 332.8 L530.5 333.5 L531.5 333.4 L532.5 334.0 L533.5 333.4 L534.5 332.6 L535.5 332.8 L536.5 332.6 L537.5 332.4 L538.5 332.7 L539.5 333.6 L540.5 334.3 L541.5 333.1 L542.5 333.2 L543.5 332.8 L544.5 332.8 L545.5 332.2 L546.5 333.0 L547.5 332.2 L548.5 334.2 L549.5 333.1 L550.5 333.7 L551.5 333.9 L552.5 333.5 L553.5 335.4 L554.5 333.1 L555.5 332.9 L556.5 333.4 L557.5 333.1 L558.5 334.2 L559.5 333.6 L560.5 332.1 L561.5 335.1 L562.5 333.8 L563.5 333.3 L564.5 335.2 L565.5 334.3 L566.5 334.0 L567.5 332.5 L568.5 333.4 L569.5 334.1 L570.5 333.4 L571.5 333.8 L572.5 333.4 L573.5 332.6 L574.5 328.9 L575.5 331.4 L576.5 332.8 L577.5 336.0 L578.5 334.2 L579.5 332.6 L580.5 333.2 L581.5 333.1 L582.5 332.1 L583.5 332.2 L584.5 331.9 L585.5 333.1 L586.5 333.3 L587.5 332.0 L588.5 332.0 L589.5 332.7 L590.5 332.4 L591.5 332.1 L592.5 331.7 L593.5 332.8 L594.5 333.7 L595.5 334.0 L596.5 333.3 L597.5 335.6 L598.5 334.1 L599.5 333.1 L600.5 326.4 L601.5 324.3 L602.5 326.2 L603.5 326.9 L604.5 326.6 L605.5 327.3 L606.5 327.3 L607.5 327.6 L608.5 327.4 L609.5 326.7 L610.5 327.8 L611.5 327.7 L612.5 331.5 L613.5 329.5 L614.5 328.6 L615.5 328.6 L616.5 328.0 L617.5 328.2 L618.5 328.5 L619.5 327.5 L620.5 326.9 L621.5 327.0 L622.5 326.8 L623.5 326.8 L624.5 325.4 L625.5 327.0 L626.5 326.2 L627.5 326.4 L628.5 326.2 L629.5 326.0 L630.5 324.0 L631.5 321.4 L632.5 320.2 L633.5 320.3 L634.5 317.8 L635.5 316.5 L636.5 316.2 L637.5 316.4 L638.5 315.8 L639.5 315.2 L640.5 315.1 L641.5 315.9 L642.5 315.3 L643.5 317.4 L644.5 319.2 L645.5 321.4 L646.5 323.9 L647.5 325.5 L648.5 327.0 L649.5 327.3 L650.5 329.3 L651.5 328.5 L652.5 328.3 L653.5 327.9 L654.5 326.7 L655.5 327.3 L656.5 324.2 L657.5 324.4 L658.5 324.2 L659.5 325.5 L660.5 323.8 L661.5 324.8 L662.5 325.2 L663.5 323.7 L664.5 324.3 L665.5 323.6 L666.5 325.9 L667.5 327.3 L668.5 326.5 L669.5 328.7 L670.5 331.8 L671.5 330.7 L672.5 330.7 L673.5 331.7 L674.5 332.0 L675.5 332.9 L676.5 331.6 L677.5 331.8 L678.5 332.2 L679.5 332.3 L680.5 333.4 L681.5 331.9 L682.5 333.0 L683.5 333.1 L684.5 331.9 L685.5 334.1 L686.5 333.5 L687.5 337.5 L688.5 335.2 L689.5 333.7 L690.5 334.3 L691.5 334.0 L692.5 333.4 L693.5 330.2 L694.5 331.8 L695.5 331.7 L696.5 333.1 L697.5 333.8 L698.5 332.9 L699.5 333.4 L700.5 333.1 L701.5 333.5 L702.5 332.8 L703.5 332.9 L704.5 333.8 L705.5 333.9 L706.5 333.4 L707.5 332.4 L708.5 333.0 L709.5 332.8 L710.5 333.1 L711.5 332.4 L712.5 332.7 L713.5 332.3 L714.5 333.5 L715.5 332.1 L716.5 332.5 L717.5 332.0 L718.5 333.1 L719.5 333.5 L720.5 333.2 L721.5 333.2 L722.5 333.4 L723.5 333.1 L724.5 332.6 L725.5 332.4 L726.5 333.8 L727.5 336.0 L728.5 333.4 L729.5 333.8 L730.5 334.3 L731.5 332.7 L732.5 333.5 L733.5 333.5 L734.5 333.3 L735.5 334.1 L736.5 332.5 L737.5 332.4 L738.5 333.3 L739.5 332.6 L740.5 334.0 L741.5 332.5 L742.5 333.2 L743.5 332.7 L744.5 332.4 L745.5 333.2 L746.5 332.3 L747.5 334.9 L748.5 333.5 L749.5 333.1 L750.5 333.5 L751.5 333.6 L752.5 333.4 L753.5 332.5 L754.5 332.3 L755.5 332.0 L756.5 334.1 L757.5 331.7 L758.5 330.2 L759.5 331.7 L760.5 334.8 L761.5 333.1 L762.5 331.7 L763.5 332.9 L764.5 333.0 L765.5 332.5 L766.5 332.3 L767.5 332.8 L768.5 333.3 L769.5 332.0 L770.5 333.1 L771.5 332.4 L772.5 333.2 L773.5 333.1 L774.5 332.5 L775.5 332.8 L776.5 332.4 L777.5 333.0 L778.5 332.6 L779.5 332.6 L780.5 333.2 L781.5 333.2 L782.5 332.8 L783.5 333.3 L784.5 333.7 L785.5 333.3 L786.5 334.3 L787.5 330.6 L788.5 331.8 L789.5 333.6 L790.5 331.7 L791.5 333.3 L792.5 333.0 L793.5 332.6 L794.5 333.4 L795.5 332.9 L796.5 333.4 L797.5 333.1 L798.5 332.7 L799.5 332.6 L800.5 333.4 L801.5 332.4 L802.5 333.8 L803.5 334.1 L804.5 333.0 L805.5 332.4 L806.5 332.1 L807.5 335.6 L808.5 332.9 L809.5 333.3 L810.5 333.5 L811.5 333.8 L812.5 332.8 L813.5 333.9 L814.5 333.5 L815.5 332.9 L816.5 333.1 L817.5 334.3 L818.5 333.9 L819.5 332.2 L820.5 334.0 L821.5 333.8 L822.5 333.5 L823.5 332.5 L824.5 333.0 L825.5 333.5 L826.5 332.1 L827.5 332.3 L828.5 333.2 L829.5 331.8 L830.5 333.6 L831.5 332.5 L832.5 333.0 L833.5 333.1 L834.5 333.2 L835.5 332.8 L836.5 333.5 L837.5 332.4 L838.5 333.3 L839.5 333.0 L840.5 333.0 L841.5 332.6 L842.5 333.5 L843.5 333.2 L844.5 332.9 L845.5 333.9 L846.5 334.0 L847.5 334.0 L848.5 334.5 L849.5 334.5 L850.5 334.2 L851.5 335.4 L852.5 333.3 L853.5 333.5 L854.5 332.7 L855.5 332.4 L856.5 332.1 L857.5 332.9 L858.5 332.8 L859.5 332.5 L860.5 333.2 L861.5 332.7 L862.5 331.4 L863.5 333.0 L864.5 332.4 L865.5 332.4 L866.5 332.7 L867.5 333.6 L868.5 332.8 L869.5 332.0 L870.5 333.7 L871.5 334.2 L872.5 332.7 L873.5 333.9 L874.5 333.0 L875.5 332.9 L876.5 332.6 L877.5 333.3 L878.5 332.3 L879.5 331.6 L880.5 332.0 L881.5 332.8 L882.5 332.5 L883.5 332.1 L884.5 333.4 L885.5 333.1 L886.5 332.3 L887.5 330.6 L888.5 331.5 L889.5 333.1 L890.5 333.2 L891.5 333.7 L892.5 333.2 L893.5 332.8 L894.5 332.2 L895.5 332.0 L896.5 332.6 L897.5 331.7 L898.5 333.9 L899.5 333.4 L900.5 333.7 L901.5 333.3 L902.5 334.0 L903.5 334.0 L904.5 333.9 L905.5 333.9 L906.5 332.7 L907.5 332.9 L908.5 332.8 L909.5 333.0 L910.5 332.3 L911.5 332.5 L912.5 333.1 L913.5 332.7 L914.5 332.2 L915.5 333.3 L916.5 333.0 L917.5 333.0 L918.5 332.9 L919.5 331.9 L920.5 333.0 L921.5 333.1 L922.5 335.6 L923.5 332.8 L924.5 333.1 L925.5 333.8 L926.5 333.6 L927.5 332.9 L928.5 334.2 L929.5 334.8 L930.5 333.2 L931.5 332.7 L932.5 333.9 L933.5 333.9 L934.5 333.1 L935.5 333.3 L936.5 333.4 L937.5 333.7 L938.5 335.1 L939.5 332.7 L940.5 333.0 L941.5 337.5 L942.5 334.1 L943.5 333.2 L944.5 333.1 L945.5 334.7 L946.5 333.8 L947.5 334.3 L948.5 334.2 L949.5 334.1 L950.5 333.5 L951.5 334.0 L952.5 332.9 L953.5 332.5 L954.5 333.4 L955.5 333.5 L956.5 333.5 L957.5 333.2 L958.5 332.5 L959.5 335.5 L960.5 334.1 L961.5 333.5 L962.5 332.4 L963.5 332.2 L964.5 333.1 L965.5 332.4 L966.5 333.9 L967.5 332.6 L968.5 332.7 L969.5 332.6 L970.5 333.1 L971.5 332.4 L972.5 333.7 L973.5 331.8 L974.5 332.4 L975.5 331.8 L976.5 332.5 L977.5 332.6 L978.5 332.7 L979.5 333.2 L980.5 333.0 L981.5 333.7 L982.5 333.5 L983.5 334.1 L984.5 333.6 L985.5 332.4 L986.5 333.5 L987.5 329.9 L988.5 331.7 L989.5 332.1 L990.5 331.9 L991.5 332.9" fill="none" stroke="#fff" stroke-width="1.25" shape-rendering="auto"/>
<path d="M601.0 229 V345" stroke="#f00000" stroke-width="2" stroke-dasharray="5 3"/>
<path d="M614.5 229 V345" stroke="#d00000" stroke-width="1" stroke-dasharray="5 3"/>
<path d="M630.5 229 V345" stroke="#d00000" stroke-width="1" stroke-dasharray="5 3"/>
<path d="M640.0 229 V345" stroke="#f00000" stroke-width="2" stroke-dasharray="5 3"/>
<path d="M645.5 229 V345" stroke="#d00000" stroke-width="1" stroke-dasharray="5 3"/>
<path d="M662.5 229 V345" stroke="#d00000" stroke-width="1" stroke-dasharray="5 3"/>
<rect x="971" y="213" width="1" height="132" fill="#e00000"/>
<rect x="5" y="345" width="988" height="1" fill="#dcd8cc"/>
<rect x="598" y="215" width="72" height="14" fill="#20281c" fill-opacity=".85"/>
<text x="600" y="225.6" font-size="10.7" fill="#fff">Dec 3 D</text><text x="639" y="225.6" font-size="10.7" fill="#fff">Dec 4</text>
</svg>
<div class="a" style="left:993px;top:46px;width:19px;height:18px;background:linear-gradient(135deg,#555 0,#2a2a2a 45%,#111 100%)"></div>
<div class="t" style="left:996px;top:50px;font-size:11.5px;font-weight:bold;color:#e8a018;letter-spacing:-.4px">2D</div>
<div class="t c" style="left:996px;width:12px;top:87px;font-size:9.8px;color:#fff">T</div>
<div class="t c" style="left:996px;width:12px;top:99px;font-size:9.8px;color:#fff">U</div>
<div class="t c" style="left:996px;width:12px;top:111px;font-size:9.8px;color:#fff">N</div>
<div class="t c" style="left:996px;width:12px;top:123px;font-size:9.8px;color:#fff">E</div>
<div class="t c" style="left:996px;width:12px;top:147px;font-size:9.8px;color:#fff">D</div>
<div class="t c" style="left:996px;width:12px;top:159px;font-size:9.8px;color:#fff">I</div>
<div class="t c" style="left:996px;width:12px;top:171px;font-size:9.8px;color:#fff">S</div>
<div class="t c" style="left:996px;width:12px;top:183px;font-size:9.8px;color:#fff">P</div>
<svg class="a" style="left:0;top:0" width="1017" height="370" shape-rendering="crispEdges"><rect x="994" y="229.5" width="17" height="60.0" fill="#1e1e1e" stroke="#3a3a3a" stroke-width="1"/><rect x="1001" y="233.5" width="3" height="52.0" fill="#5c5c5c"/><rect x="996" y="243" width="4" height="1" fill="#c8c8c8"/><rect x="1005" y="243" width="4" height="1" fill="#c8c8c8"/><rect x="996" y="248" width="4" height="1" fill="#c8c8c8"/><rect x="1005" y="248" width="4" height="1" fill="#c8c8c8"/><rect x="996" y="254" width="4" height="1" fill="#c8c8c8"/><rect x="1005" y="254" width="4" height="1" fill="#c8c8c8"/><rect x="996" y="259" width="4" height="1" fill="#c8c8c8"/><rect x="1005" y="259" width="4" height="1" fill="#c8c8c8"/><rect x="996" y="265" width="4" height="1" fill="#c8c8c8"/><rect x="1005" y="265" width="4" height="1" fill="#c8c8c8"/><rect x="996" y="270" width="4" height="1" fill="#c8c8c8"/><rect x="1005" y="270" width="4" height="1" fill="#c8c8c8"/><rect x="996" y="275" width="4" height="1" fill="#c8c8c8"/><rect x="1005" y="275" width="4" height="1" fill="#c8c8c8"/><rect x="996" y="280" width="4" height="1" fill="#c8c8c8"/><rect x="1005" y="280" width="4" height="1" fill="#c8c8c8"/><rect x="997" y="239" width="11" height="7" fill="#8a8a8a"/><rect x="997" y="239" width="11" height="1" fill="#b0b0b0"/><rect x="999" y="241" width="7" height="3" fill="#e89c10"/><rect x="994" y="290.5" width="17" height="58.0" fill="#1e1e1e" stroke="#3a3a3a" stroke-width="1"/><rect x="1001" y="294.5" width="3" height="50.0" fill="#5c5c5c"/><rect x="996" y="299" width="4" height="1" fill="#c8c8c8"/><rect x="1005" y="299" width="4" height="1" fill="#c8c8c8"/><rect x="996" y="305" width="4" height="1" fill="#c8c8c8"/><rect x="1005" y="305" width="4" height="1" fill="#c8c8c8"/><rect x="996" y="310" width="4" height="1" fill="#c8c8c8"/><rect x="1005" y="310" width="4" height="1" fill="#c8c8c8"/><rect x="996" y="315" width="4" height="1" fill="#c8c8c8"/><rect x="1005" y="315" width="4" height="1" fill="#c8c8c8"/><rect x="996" y="321" width="4" height="1" fill="#c8c8c8"/><rect x="1005" y="321" width="4" height="1" fill="#c8c8c8"/><rect x="996" y="326" width="4" height="1" fill="#c8c8c8"/><rect x="1005" y="326" width="4" height="1" fill="#c8c8c8"/><rect x="996" y="331" width="4" height="1" fill="#c8c8c8"/><rect x="1005" y="331" width="4" height="1" fill="#c8c8c8"/><rect x="996" y="336" width="4" height="1" fill="#c8c8c8"/><rect x="1005" y="336" width="4" height="1" fill="#c8c8c8"/><rect x="996" y="342" width="4" height="1" fill="#c8c8c8"/><rect x="1005" y="342" width="4" height="1" fill="#c8c8c8"/><rect x="997" y="317" width="11" height="7" fill="#8a8a8a"/><rect x="997" y="317" width="11" height="1" fill="#b0b0b0"/><rect x="999" y="319" width="7" height="3" fill="#e89c10"/></svg>
<div class="a" style="left:5px;top:346px;width:988px;height:19px;background:#000"></div>
<div class="a c" style="left:6px;top:347px;width:492px;height:17px;background:linear-gradient(#f4f1e2,#e2dfd2);border-radius:2px;line-height:17px;font-size:10.67px">SAVE DISPLAY 1</div>
<div class="a c" style="left:500px;top:347px;width:492px;height:17px;background:linear-gradient(#f4f1e2,#e2dfd2);border-radius:2px;line-height:17px;font-size:10.67px">SAVE DISPLAY 2</div>
<div class="a c" style="left:9px;top:366px;width:51px;height:20px;background:#9ddcf9;line-height:20px;font-size:12px;color:#000">MSK144</div>
<div class="a" style="left:65px;top:369px;width:13px;height:13px;border:1px solid #9a9a9a;border-radius:1px;background:linear-gradient(135deg,#ececec,#fff 60%)"></div>
<div class="t" style="left:83px;top:370px;font-size:12px">Auto Dec</div>
<div class="a" style="left:146px;top:369px;width:13px;height:13px;border:1px solid #9a9a9a;border-radius:1px;background:linear-gradient(135deg,#ececec,#fff 60%)"></div><svg class="a" style="left:148px;top:371px" width="9" height="9"><path d="M1 1 L8 8 M8 1 L1 8" stroke="#000" stroke-width="2.9"/></svg>
<div class="t" style="left:164px;top:370px;font-size:12px">RT Dec</div>
<div class="a c" style="left:220px;top:366px;width:60px;height:20px;background:#ffff00;border:1px solid #f8f890;line-height:18px;font-size:12px;color:#141400">DECODE</div>
<div class="a c" style="left:285px;top:366px;width:60px;height:20px;background:#3ae01a;border:1px solid #7cec64;line-height:18px;font-size:12px;color:#002800">RECEIVE</div>
<div class="a" style="left:351px;top:366px;width:453px;height:21px;border:1px solid #808080;border-right-color:#fff;border-bottom-color:#fff"></div>
<div class="t" style="left:356px;top:371px;font-size:12.5px;letter-spacing:.42px;font-weight:bold">Txing:</div>
<div class="a" style="left:808px;top:366px;width:200px;height:20px;background:#000"></div>
<svg class="a" style="left:808px;top:366px" width="200" height="20" shape-rendering="crispEdges" font-family="Liberation Sans, sans-serif" font-weight="bold" font-size="10.7"><rect x="0" y="0" width="3" height="10" fill="#00b0ff"/><rect x="4" y="0" width="3" height="10" fill="#00b0ff"/><rect x="8" y="0" width="3" height="10" fill="#00b0ff"/><rect x="12" y="0" width="3" height="10" fill="#00b0ff"/><rect x="16" y="0" width="3" height="10" fill="#00b0ff"/><rect x="20" y="0" width="3" height="10" fill="#00b0ff"/><rect x="24" y="0" width="3" height="10" fill="#00b0ff"/><rect x="28" y="0" width="3" height="10" fill="#00b0ff"/><rect x="32" y="0" width="3" height="10" fill="#00b0ff"/><rect x="36" y="0" width="3" height="10" fill="#00b0ff"/><rect x="40" y="0" width="3" height="10" fill="#00b0ff"/><rect x="44" y="0" width="3" height="10" fill="#00b0ff"/><rect x="48" y="0" width="3" height="10" fill="#00b0ff"/><rect x="52" y="0" width="3" height="10" fill="#00b0ff"/><rect x="56" y="0" width="3" height="10" fill="#00b0ff"/><rect x="60" y="0" width="3" height="10" fill="#00b0ff"/><rect x="64" y="0" width="3" height="10" fill="#00b0ff"/><rect x="68" y="0" width="3" height="10" fill="#00b0ff"/><rect x="72" y="0" width="3" height="10" fill="#00b0ff"/><rect x="76" y="0" width="3" height="10" fill="#00b0ff"/><rect x="80" y="0" width="3" height="10" fill="#00b0ff"/><rect x="84" y="0" width="3" height="10" fill="#00b0ff"/><rect x="88" y="0" width="3" height="10" fill="#00b0ff"/><rect x="92" y="0" width="3" height="10" fill="#00b0ff"/><rect x="96" y="0" width="3" height="10" fill="#00b0ff"/><rect x="100" y="0" width="3" height="10" fill="#00d000"/><rect x="104" y="0" width="3" height="10" fill="#00d000"/><rect x="108" y="0" width="3" height="10" fill="#00d000"/><rect x="112" y="0" width="3" height="10" fill="#00d000"/><rect x="116" y="0" width="3" height="10" fill="#00d000"/><rect x="120" y="0" width="3" height="10" fill="#00d000"/><rect x="124" y="0" width="3" height="10" fill="#5a5a10"/><rect x="128" y="0" width="3" height="10" fill="#ffff00"/><rect x="132" y="0" width="3" height="10" fill="#5a3a10"/><rect x="136" y="0" width="3" height="10" fill="#5a3a10"/><rect x="140" y="0" width="3" height="10" fill="#5a3a10"/><rect x="144" y="0" width="3" height="10" fill="#5a0808"/><rect x="148" y="0" width="3" height="10" fill="#5a0808"/><rect x="152" y="0" width="3" height="10" fill="#5a0808"/><rect x="156" y="0" width="3" height="10" fill="#5a0808"/><rect x="160" y="0" width="3" height="10" fill="#5a0808"/><rect x="164" y="0" width="3" height="10" fill="#5a0808"/><rect x="168" y="0" width="3" height="10" fill="#5a0808"/><rect x="172" y="0" width="3" height="10" fill="#5a0808"/><rect x="176" y="0" width="3" height="10" fill="#5a0808"/><rect x="180" y="0" width="3" height="10" fill="#5a0808"/><rect x="184" y="0" width="3" height="10" fill="#5a0808"/><rect x="188" y="0" width="3" height="10" fill="#5a0808"/><rect x="192" y="0" width="3" height="10" fill="#5a0808"/><rect x="196" y="0" width="3" height="10" fill="#5a0808"/><g shape-rendering="auto"><text x="2" y="19" fill="#00a8f8">dB</text><text x="23.5" y="19" fill="#00a8f8">-40</text><text x="48.5" y="19" fill="#00a8f8">-30</text><text x="72.5" y="19" fill="#00a8f8">-20</text><text x="96.5" y="19" fill="#00b000">-10</text><text x="126.5" y="19" fill="#00b000">0</text><text x="141" y="19" fill="#f00000">+10</text><text x="164.5" y="19" fill="#f00000">+20</text><text x="185" y="19" fill="#f00000">dB</text></g></svg>
<div class="a" style="left:5px;top:388px;width:1007px;height:308px;border:1px solid #8e8b84;border-radius:3px;background:#fff;box-shadow:inset 0 -1px 0 #c4c1b9,inset 1px 0 0 #c4c1b9"></div>
<div class="a" style="left:6px;top:389px;width:1005px;height:19px;background:#d4d0c8"></div>
<div class="a c hd" style="left:7px;top:389px;width:70px;height:19px;border:1px solid #807d75;border-radius:2px;background:linear-gradient(#dfdcd5,#c8c5bd);box-shadow:inset 1px 1px 0 #f0eee8;line-height:20px;font-size:12px">Time</div>
<div class="a c hd" style="left:77px;top:389px;width:50px;height:19px;border:1px solid #807d75;border-radius:2px;background:linear-gradient(#dfdcd5,#c8c5bd);box-shadow:inset 1px 1px 0 #f0eee8;line-height:20px;font-size:12px">T</div>
<div class="a c hd" style="left:127px;top:389px;width:50px;height:19px;border:1px solid #807d75;border-radius:2px;background:linear-gradient(#dfdcd5,#c8c5bd);box-shadow:inset 1px 1px 0 #f0eee8;line-height:20px;font-size:12px">dB</div>
<div class="a c hd" style="left:177px;top:389px;width:50px;height:19px;border:1px solid #807d75;border-radius:2px;background:linear-gradient(#dfdcd5,#c8c5bd);box-shadow:inset 1px 1px 0 #f0eee8;line-height:20px;font-size:12px">DF</div>
<div class="a c hd" style="left:227px;top:389px;width:539px;height:19px;border:1px solid #807d75;border-radius:2px;background:linear-gradient(#dfdcd5,#c8c5bd);box-shadow:inset 1px 1px 0 #f0eee8;line-height:20px;font-size:12px">Message</div>
<div class="a c hd" style="left:766px;top:389px;width:50px;height:19px;border:1px solid #807d75;border-radius:2px;background:linear-gradient(#dfdcd5,#c8c5bd);box-shadow:inset 1px 1px 0 #f0eee8;line-height:20px;font-size:12px">Navg</div>
<div class="a c hd" style="left:816px;top:389px;width:50px;height:19px;border:1px solid #807d75;border-radius:2px;background:linear-gradient(#dfdcd5,#c8c5bd);box-shadow:inset 1px 1px 0 #f0eee8;line-height:20px;font-size:12px">Bit err</div>
<div class="a c hd" style="left:866px;top:389px;width:58px;height:19px;border:1px solid #807d75;border-radius:2px;background:linear-gradient(#dfdcd5,#c8c5bd);box-shadow:inset 1px 1px 0 #f0eee8;line-height:20px;font-size:12px">Eye</div>
<div class="a c hd" style="left:924px;top:389px;width:70px;height:19px;border:1px solid #807d75;border-radius:2px;background:linear-gradient(#dfdcd5,#c8c5bd);box-shadow:inset 1px 1px 0 #f0eee8;line-height:20px;font-size:12px">Freq</div>
<div class="t mono c" style="left:6px;width:71px;top:411px;">091500</div>
<div class="t mono c" style="left:77px;width:50px;top:411px;">13.9</div>
<div class="t mono c" style="left:127px;width:50px;top:411px;">6</div>
<div class="t mono c" style="left:177px;width:50px;top:411px;">−160</div>
<div class="t mono" style="left:232px;top:411px;">EI8IQ SP2AJ JO92</div>
<div class="t mono c" style="left:766px;width:50px;top:411px;">1</div>
<div class="t mono c" style="left:816px;width:50px;top:411px;">2</div>
<div class="t mono c" style="left:866px;width:58px;top:411px;">−0.6</div>
<div class="t mono" style="left:942px;top:411px;">* 1339</div>
<div class="a" style="left:7px;top:424px;width:987px;height:16px;background:#d5dff1"></div>
<div class="t mono c" style="left:6px;width:71px;top:427px;">092200</div>
<div class="t mono c" style="left:77px;width:50px;top:427px;">18.6</div>
<div class="t mono c" style="left:127px;width:50px;top:427px;">10</div>
<div class="t mono c" style="left:177px;width:50px;top:427px;">28</div>
<div class="t mono" style="left:232px;top:427px;">DL7UDA UR3EE +11</div>
<div class="t mono c" style="left:766px;width:50px;top:427px;">1</div>
<div class="t mono c" style="left:816px;width:50px;top:427px;">0</div>
<div class="t mono c" style="left:866px;width:58px;top:427px;">1.0</div>
<div class="t mono" style="left:942px;top:427px;">* 1528</div>
<div class="t mono c" style="left:6px;width:71px;top:443px;">092330</div>
<div class="t mono c" style="left:77px;width:50px;top:443px;">20.4</div>
<div class="t mono c" style="left:127px;width:50px;top:443px;">−8</div>
<div class="t mono c" style="left:177px;width:50px;top:443px;">−382</div>
<div class="t mono" style="left:232px;top:443px;">IV9HVQ R 591828 GC38UK</div>
<div class="t mono c" style="left:766px;width:50px;top:443px;">2</div>
<div class="t mono c" style="left:816px;width:50px;top:443px;">38</div>
<div class="t mono c" style="left:866px;width:58px;top:443px;">−3.7</div>
<div class="t mono" style="left:942px;top:443px;">* 1117</div>
<div class="a" style="left:7px;top:456px;width:987px;height:16px;background:#d5dff1"></div>
<div class="t mono c" style="left:6px;width:71px;top:459px;">093200</div>
<div class="t mono c" style="left:77px;width:50px;top:459px;">23.8</div>
<div class="t mono c" style="left:127px;width:50px;top:459px;">7</div>
<div class="t mono c" style="left:177px;width:50px;top:459px;">7</div>
<div class="t mono" style="left:232px;top:459px;">DL7UDA UR3EE RRR</div>
<div class="t mono c" style="left:766px;width:50px;top:459px;">1</div>
<div class="t mono c" style="left:816px;width:50px;top:459px;">11</div>
<div class="t mono c" style="left:866px;width:58px;top:459px;">−0.9</div>
<div class="t mono" style="left:942px;top:459px;">* 1507</div>
<div class="t mono c" style="left:6px;width:71px;top:475px;">094230</div>
<div class="t mono c" style="left:77px;width:50px;top:475px;">18.1</div>
<div class="t mono c" style="left:127px;width:50px;top:475px;">2</div>
<div class="t mono c" style="left:177px;width:50px;top:475px;">−16</div>
<div class="t mono" style="left:232px;top:475px;">UA6LJV OK2WO +05</div>
<div class="t mono c" style="left:766px;width:50px;top:475px;">1</div>
<div class="t mono c" style="left:816px;width:50px;top:475px;">6</div>
<div class="t mono c" style="left:866px;width:58px;top:475px;">−0.8</div>
<div class="t mono" style="left:942px;top:475px;">* 1483</div>
<div class="t mono c" style="left:6px;width:71px;top:491px;">094230</div>
<div class="t mono c" style="left:77px;width:50px;top:491px;">19.0</div>
<div class="t mono c" style="left:127px;width:50px;top:491px;">6</div>
<div class="t mono c" style="left:177px;width:50px;top:491px;">−15</div>
<div class="t mono" style="left:232px;top:491px;">UA6LJV OK2WO +05</div>
<div class="t mono c" style="left:766px;width:50px;top:491px;">1</div>
<div class="t mono c" style="left:816px;width:50px;top:491px;">4</div>
<div class="t mono c" style="left:866px;width:58px;top:491px;">−0.5</div>
<div class="t mono" style="left:942px;top:491px;">* 1484</div>
<div class="t mono c" style="left:6px;width:71px;top:507px;font-weight:bold;">094230</div>
<div class="t mono c" style="left:77px;width:50px;top:507px;font-weight:bold;">19.3</div>
<div class="t mono c" style="left:127px;width:50px;top:507px;font-weight:bold;">7</div>
<div class="t mono c" style="left:177px;width:50px;top:507px;font-weight:bold;">−15</div>
<div class="t mono" style="left:232px;top:507px;font-weight:bold;">UA6LJV OK2WO +05</div>
<div class="t mono c" style="left:766px;width:50px;top:507px;font-weight:bold;">1</div>
<div class="t mono c" style="left:816px;width:50px;top:507px;font-weight:bold;">0</div>
<div class="t mono c" style="left:866px;width:58px;top:507px;font-weight:bold;">0.2</div>
<div class="t mono" style="left:942px;top:507px;font-weight:bold;">* 1484</div>
<div class="a" style="left:77px;top:408px;width:0;height:286px;border-left:1px dashed #bcbcbc"></div>
<div class="a" style="left:127px;top:408px;width:0;height:286px;border-left:1px dashed #bcbcbc"></div>
<div class="a" style="left:177px;top:408px;width:0;height:286px;border-left:1px dashed #bcbcbc"></div>
<div class="a" style="left:227px;top:408px;width:0;height:286px;border-left:1px dashed #bcbcbc"></div>
<div class="a" style="left:766px;top:408px;width:0;height:286px;border-left:1px dashed #bcbcbc"></div>
<div class="a" style="left:816px;top:408px;width:0;height:286px;border-left:1px dashed #bcbcbc"></div>
<div class="a" style="left:866px;top:408px;width:0;height:286px;border-left:1px dashed #bcbcbc"></div>
<div class="a" style="left:924px;top:408px;width:0;height:286px;border-left:1px dashed #bcbcbc"></div>
<div class="a" style="left:994px;top:389px;width:17px;height:305px;background:#d4d0c8"></div>
<div class="a" style="left:994px;top:390px;width:16px;height:16px;border:1px solid #8e8b84;border-radius:3px;background:#d4d0c8;box-shadow:inset 1px 1px 0 #eeece6"></div>
<div class="a" style="left:994px;top:405px;width:16px;height:257px;border:1px solid #8e8b84;border-radius:3px;background:#d4d0c8;box-shadow:inset 1px 1px 0 #eeece6"></div>
<div class="a" style="left:994px;top:662px;width:16px;height:16px;border:1px solid #8e8b84;border-radius:3px;background:#d4d0c8;box-shadow:inset 1px 1px 0 #eeece6"></div>
<div class="a" style="left:994px;top:678px;width:16px;height:16px;border:1px solid #8e8b84;border-radius:3px;background:#d4d0c8;box-shadow:inset 1px 1px 0 #eeece6"></div>
<svg class="a" style="left:998px;top:394px" width="7" height="5"><polygon points="0,4.5 3.5,0.5 7,4.5" fill="#000"/></svg>
<svg class="a" style="left:998px;top:667px" width="7" height="5"><polygon points="0,4.5 3.5,0.5 7,4.5" fill="#000"/></svg>
<svg class="a" style="left:998px;top:684px" width="7" height="5"><polygon points="0,0 7,0 3.5,4" fill="#000"/></svg>
<svg class="a" style="left:998px;top:526px" width="11" height="19" shape-rendering="crispEdges"><rect x="0" y="0" width="1" height="1" fill="#8a8780"/><rect x="1" y="1" width="1" height="1" fill="#fff"/><rect x="0" y="4" width="1" height="1" fill="#8a8780"/><rect x="1" y="5" width="1" height="1" fill="#fff"/><rect x="0" y="8" width="1" height="1" fill="#8a8780"/><rect x="1" y="9" width="1" height="1" fill="#fff"/><rect x="0" y="12" width="1" height="1" fill="#8a8780"/><rect x="1" y="13" width="1" height="1" fill="#fff"/><rect x="0" y="16" width="1" height="1" fill="#8a8780"/><rect x="1" y="17" width="1" height="1" fill="#fff"/><rect x="4" y="0" width="1" height="1" fill="#8a8780"/><rect x="5" y="1" width="1" height="1" fill="#fff"/><rect x="4" y="4" width="1" height="1" fill="#8a8780"/><rect x="5" y="5" width="1" height="1" fill="#fff"/><rect x="4" y="8" width="1" height="1" fill="#8a8780"/><rect x="5" y="9" width="1" height="1" fill="#fff"/><rect x="4" y="12" width="1" height="1" fill="#8a8780"/><rect x="5" y="13" width="1" height="1" fill="#fff"/><rect x="4" y="16" width="1" height="1" fill="#8a8780"/><rect x="5" y="17" width="1" height="1" fill="#fff"/><rect x="8" y="0" width="1" height="1" fill="#8a8780"/><rect x="9" y="1" width="1" height="1" fill="#fff"/><rect x="8" y="4" width="1" height="1" fill="#8a8780"/><rect x="9" y="5" width="1" height="1" fill="#fff"/><rect x="8" y="8" width="1" height="1" fill="#8a8780"/><rect x="9" y="9" width="1" height="1" fill="#fff"/><rect x="8" y="12" width="1" height="1" fill="#8a8780"/><rect x="9" y="13" width="1" height="1" fill="#fff"/><rect x="8" y="16" width="1" height="1" fill="#8a8780"/><rect x="9" y="17" width="1" height="1" fill="#fff"/></svg>
<div class="btn" style="left:6px;top:696px;width:187px;height:20px;line-height:19px;background:linear-gradient(#36f236,#2bdc2b);border-color:#8e8b84;border-left-color:#52d852;box-shadow:none">MONITOR</div>
<div class="btn" style="left:193px;top:696px;width:188px;height:20px;line-height:19px;">STOP MONITOR</div>
<div class="btn" style="left:382px;top:696px;width:188px;height:20px;line-height:19px;">CLEAR MESSAGES</div>
<div class="btn" style="left:570px;top:696px;width:189px;height:20px;line-height:19px;">RESET QSO</div>
<div class="btn" style="left:760px;top:696px;width:187px;height:20px;line-height:19px;">STOP TX</div>
<div class="btn" style="left:947px;top:696px;width:64px;height:20px;line-height:19px;">TUNE</div>
<div class="a" style="left:7px;top:718px;width:370px;height:163px;border:1px solid #fff;border-right-color:#404040;border-bottom-color:#404040;box-shadow:inset -1px -1px 0 #808080,0 -1px 0 #f4f3f0"></div>
<div class="a" style="left:380px;top:718px;width:258px;height:163px;border:1px solid #fff;border-right-color:#404040;border-bottom-color:#404040;box-shadow:inset -1px -1px 0 #808080,0 -1px 0 #f4f3f0"></div>
<div class="a" style="left:641px;top:718px;width:369px;height:163px;border:1px solid #fff;border-right-color:#404040;border-bottom-color:#404040;box-shadow:inset -1px -1px 0 #808080,0 -1px 0 #f4f3f0"></div>
<div class="t" id="call" style="left:50px;top:729px;font-size:16.3px;-webkit-text-stroke:.55px #000">R3KEE KO91</div>
<div class="a" style="left:163px;top:726px;width:171px;height:23px;border:1px solid #a0a0a0;border-radius:4px;background:#dcffdc"></div>
<div class="t" style="left:169px;top:731px;font-size:13px;font-weight:bold;color:#0000b4;letter-spacing:-.3px">DIGU</div>
<div class="t" id="frq" style="left:213px;top:729px;font-size:16px;-webkit-text-stroke:.55px #000">144.360.000</div>
<div class="a c" style="left:315px;top:730px;width:15px;height:15px;border:1px solid #808080;border-radius:3px;background:linear-gradient(#fafafa,#dcdcdc);font-size:11.5px;line-height:13px">F</div>
<div class="btn" style="left:10px;top:752px;width:82px;height:21px;line-height:20px;">ADD TO LOG</div>
<div class="t red" style="left:95px;top:757px">To Radio:</div>
<div class="inp yel" style="left:147px;top:752px;width:106px;height:21px"></div>
<div class="t" style="left:255px;top:757px;letter-spacing:-.3px">RX RPT :</div>
<div class="inp" style="left:306px;top:752px;width:52px;height:21px;line-height:19px;padding-left:4px">+00</div>
<div class="a" style="left:358px;top:753px;width:16px;height:20px;border:1px solid #a8a59c;border-radius:3px;background:linear-gradient(#f6f4ee,#e0ddd4 50%,#f2f0ea 50%,#dad7ce)"></div><div class="a" style="left:359px;top:763px;width:14px;height:1px;background:#b8b5ac"></div><svg class="a" style="left:362.0px;top:756.0px" width="8" height="4"><polygon points="0,4 4,0 8,4" fill="#000"/></svg><svg class="a" style="left:362.0px;top:766.5px" width="8" height="4"><polygon points="0,0 8,0 4,4" fill="#000"/></svg>
<div class="t red" style="left:41px;top:782px">Locator:</div>
<div class="inp yel" style="left:87px;top:777px;width:93px;height:21px"></div>
<div class="t" style="left:182px;top:782px">DB:NA</div>
<div class="btn" style="left:220px;top:777px;width:75px;height:21px;line-height:20px;color:#c80000;">LOOKUP</div>
<div class="btn" style="left:297px;top:777px;width:45px;height:21px;line-height:20px;color:#c80000;">ADD</div>
<div class="t" style="left:42px;top:805px;white-space:pre">Hot  : NA°</div>
<div class="t" style="left:104px;top:805px">Азимут: NA°</div>
<div class="t" style="left:182px;top:805px">Элевация: NA°</div>
<div class="t" style="left:276px;top:805px">Дист: NA<span style="font-size:11px"> км</span></div>
<div class="t" style="left:46px;top:827px">Monitor <span class="red">R1:</span></div>
<div class="inp yel" style="left:111px;top:822px;width:101px;height:21px"></div>
<div class="t red" style="left:216px;top:827px">R2:</div>
<div class="inp yel" style="left:237px;top:822px;width:101px;height:21px"></div>
<div class="t" style="left:103px;top:851px;font-size:16px;font-weight:bold">9 авг 2019</div>
<div class="t" style="left:193px;top:848px;font-size:21.3px;font-weight:bold">09:43:01</div>
<div class="inp" style="left:383px;top:722px;width:204px;height:20px;background:#d4d0c8;color:#7c7c7c;border-color:#8e8b84;line-height:18px;padding-left:3px;white-space:pre">S Limit - N/A - 1  dB</div>
<div class="a" style="left:571px;top:723px;width:15px;height:18px;border:1px solid #a8a59c;border-radius:3px;background:linear-gradient(#f6f4ee,#e0ddd4 50%,#f2f0ea 50%,#dad7ce)"></div><div class="a" style="left:572px;top:732px;width:13px;height:1px;background:#b8b5ac"></div><svg class="a" style="left:574.5px;top:725.5px" width="8" height="4"><polygon points="0,4 4,0 8,4" fill="#8a8a8a"/></svg><svg class="a" style="left:574.5px;top:735.0px" width="8" height="4"><polygon points="0,0 8,0 4,4" fill="#8a8a8a"/></svg>
<div class="a" style="left:589px;top:725px;width:13px;height:13px;border:1px solid #9a9a9a;border-radius:1px;background:#dedbd4"></div>
<div class="t" style="left:608px;top:726px;color:#7c7c7c;text-shadow:1px 1px 0 #fff;letter-spacing:-1px">ZAP</div>
<div class="inp" style="left:383px;top:746px;width:252px;height:21px;line-height:19px;padding-left:3px;white-space:pre">DF Tol def=150 +/-  400  Hz</div>
<div class="a" style="left:619px;top:747px;width:15px;height:19px;border:1px solid #a8a59c;border-radius:3px;background:linear-gradient(#f6f4ee,#e0ddd4 50%,#f2f0ea 50%,#dad7ce)"></div><div class="a" style="left:620px;top:756px;width:13px;height:1px;background:#b8b5ac"></div><svg class="a" style="left:622.5px;top:749.5px" width="8" height="4"><polygon points="0,4 4,0 8,4" fill="#000"/></svg><svg class="a" style="left:622.5px;top:759.0px" width="8" height="4"><polygon points="0,0 8,0 4,4" fill="#000"/></svg>
<div class="a" style="left:383px;top:778px;width:13px;height:13px;border:1px solid #9a9a9a;border-radius:1px;background:linear-gradient(135deg,#ececec,#fff 60%)"></div>
<div class="t" style="left:401px;top:779px">Sh</div>
<div class="a" style="left:425px;top:778px;width:13px;height:13px;border:1px solid #9a9a9a;border-radius:1px;background:linear-gradient(135deg,#ececec,#fff 60%)"></div>
<div class="t" style="left:443px;top:779px">SWL</div>
<div class="t" style="left:518px;top:779px;letter-spacing:-.3px">TX RPT :</div>
<div class="inp" style="left:567px;top:774px;width:52px;height:21px;line-height:19px;padding-left:4px">+00</div>
<div class="a" style="left:619px;top:775px;width:16px;height:20px;border:1px solid #a8a59c;border-radius:3px;background:linear-gradient(#f6f4ee,#e0ddd4 50%,#f2f0ea 50%,#dad7ce)"></div><div class="a" style="left:620px;top:785px;width:14px;height:1px;background:#b8b5ac"></div><svg class="a" style="left:623.0px;top:778.0px" width="8" height="4"><polygon points="0,4 4,0 8,4" fill="#000"/></svg><svg class="a" style="left:623.0px;top:788.5px" width="8" height="4"><polygon points="0,0 8,0 4,4" fill="#000"/></svg>
<div class="a c" style="left:383px;top:802px;width:29px;height:19px;background:#ff0000;color:#600000;line-height:19px;font-size:12px;letter-spacing:-.2px">ASeq</div>
<div class="inp" style="left:415px;top:801px;width:88px;height:21px;line-height:19px;padding-left:3px;white-space:pre">TX/RX 30  s</div>
<div class="a" style="left:486px;top:802px;width:16px;height:20px;border:1px solid #a8a59c;border-radius:3px;background:linear-gradient(#f6f4ee,#e0ddd4 50%,#f2f0ea 50%,#dad7ce)"></div><div class="a" style="left:487px;top:812px;width:14px;height:1px;background:#b8b5ac"></div><svg class="a" style="left:490.0px;top:805.0px" width="8" height="4"><polygon points="0,4 4,0 8,4" fill="#000"/></svg><svg class="a" style="left:490.0px;top:815.5px" width="8" height="4"><polygon points="0,0 8,0 4,4" fill="#000"/></svg>
<div class="t" style="left:507px;top:806px">QRG :</div>
<div class="inp" style="left:542px;top:801px;width:93px;height:21px;line-height:19px;padding-left:4px">351</div>
<div class="a c" style="left:383px;top:828px;width:79px;height:19px;border:1px solid #9a978e;border-right-color:#fff;border-bottom-color:#fff;line-height:17px">RXS</div>
<div class="a" style="left:464px;top:832px;width:12px;height:12px;border:1px solid #9a9a9a;border-radius:50%;background:radial-gradient(circle at 40% 40%,#fff 40%,#e4e4e4)"></div><div class="a" style="left:467px;top:835px;width:6px;height:6px;border-radius:50%;background:#000"></div>
<div class="t" style="left:482px;top:832px">TX FIRST</div>
<div class="a" style="left:543px;top:832px;width:12px;height:12px;border:1px solid #9a9a9a;border-radius:50%;background:radial-gradient(circle at 40% 40%,#fff 40%,#e4e4e4)"></div>
<div class="t" style="left:561px;top:832px">TX SECOND</div>
<div class="btn" style="left:384px;top:853px;width:125px;height:21px;line-height:20px;">GEN MSG</div>
<div class="btn" style="left:510px;top:853px;width:124px;height:21px;line-height:20px;">AUTO IS OFF</div>
<div class="t" style="left:644px;top:721px">RX</div>
<div class="t" style="left:645px;top:735px;font-size:9.5px;font-weight:bold;color:#a00000;letter-spacing:-.3px">+20</div>
<div class="a" style="left:644px;top:747px;width:17px;height:118px;background:#ece9d8;border:1px solid #c4c0ae"></div><svg class="a" style="left:0;top:0" width="1017" height="887" shape-rendering="crispEdges"><rect x="651" y="752" width="3" height="108" fill="#fdfdfb"/><rect x="651" y="752" width="1" height="108" fill="#9a978e"/><rect x="653" y="752" width="1" height="108" fill="#b8b5aa"/><rect x="651" y="752" width="3" height="1" fill="#9a978e"/><rect x="645" y="758" width="5" height="1" fill="#000"/><rect x="655" y="758" width="5" height="1" fill="#000"/><rect x="645" y="764" width="5" height="1" fill="#000"/><rect x="655" y="764" width="5" height="1" fill="#000"/><rect x="645" y="770" width="5" height="1" fill="#000"/><rect x="655" y="770" width="5" height="1" fill="#000"/><rect x="645" y="776" width="5" height="1" fill="#000"/><rect x="655" y="776" width="5" height="1" fill="#000"/><rect x="645" y="782" width="5" height="1" fill="#000"/><rect x="655" y="782" width="5" height="1" fill="#000"/><rect x="645" y="788" width="5" height="1" fill="#000"/><rect x="655" y="788" width="5" height="1" fill="#000"/><rect x="645" y="794" width="5" height="1" fill="#000"/><rect x="655" y="794" width="5" height="1" fill="#000"/><rect x="645" y="800" width="5" height="1" fill="#000"/><rect x="655" y="800" width="5" height="1" fill="#000"/><rect x="645" y="806" width="5" height="1" fill="#000"/><rect x="655" y="806" width="5" height="1" fill="#000"/><rect x="645" y="812" width="5" height="1" fill="#000"/><rect x="655" y="812" width="5" height="1" fill="#000"/><rect x="645" y="818" width="5" height="1" fill="#000"/><rect x="655" y="818" width="5" height="1" fill="#000"/><rect x="645" y="824" width="5" height="1" fill="#000"/><rect x="655" y="824" width="5" height="1" fill="#000"/><rect x="645" y="830" width="5" height="1" fill="#000"/><rect x="655" y="830" width="5" height="1" fill="#000"/><rect x="645" y="836" width="5" height="1" fill="#000"/><rect x="655" y="836" width="5" height="1" fill="#000"/><rect x="645" y="842" width="5" height="1" fill="#000"/><rect x="655" y="842" width="5" height="1" fill="#000"/><rect x="645" y="848" width="5" height="1" fill="#000"/><rect x="655" y="848" width="5" height="1" fill="#000"/><rect x="645" y="854" width="5" height="1" fill="#000"/><rect x="655" y="854" width="5" height="1" fill="#000"/><rect x="647" y="780" width="11" height="9" rx="1" fill="#c6c6c6" stroke="#8a8a8a" stroke-width="1"/><rect x="649" y="782" width="7" height="4" fill="#b00000"/></svg>
<div class="t" style="left:646px;top:868px;font-size:9.5px;font-weight:bold;color:#0000c8;letter-spacing:-.3px">-20</div>
<div class="inp blu" style="left:665px;top:720px;width:272px;height:21px;line-height:19px;padding-left:6px;font-size:12px;letter-spacing:-.1px">R3KEE KO91</div>
<div class="a" style="left:942px;top:724px;width:12px;height:12px;border:1px solid #9a9a9a;border-radius:50%;background:radial-gradient(circle at 40% 40%,#fff 40%,#e4e4e4)"></div>
<div class="btn" style="left:958px;top:720px;width:29px;height:21px;line-height:20px;">Tx1</div>
<div class="inp blu" style="left:665px;top:743px;width:272px;height:21px;line-height:19px;padding-left:6px;font-size:12px;letter-spacing:-.1px">R3KEE +00</div>
<div class="a" style="left:942px;top:747px;width:12px;height:12px;border:1px solid #9a9a9a;border-radius:50%;background:radial-gradient(circle at 40% 40%,#fff 40%,#e4e4e4)"></div>
<div class="btn" style="left:958px;top:743px;width:29px;height:21px;line-height:20px;">Tx2</div>
<div class="inp blu" style="left:665px;top:766px;width:272px;height:21px;line-height:19px;padding-left:6px;font-size:12px;letter-spacing:-.1px">R3KEE R+00</div>
<div class="a" style="left:942px;top:770px;width:12px;height:12px;border:1px solid #9a9a9a;border-radius:50%;background:radial-gradient(circle at 40% 40%,#fff 40%,#e4e4e4)"></div>
<div class="btn" style="left:958px;top:766px;width:29px;height:21px;line-height:20px;">Tx3</div>
<div class="inp blu" style="left:665px;top:788px;width:272px;height:21px;line-height:19px;padding-left:6px;font-size:12px;letter-spacing:-.1px">R3KEE RR73</div>
<div class="a" style="left:942px;top:792px;width:12px;height:12px;border:1px solid #9a9a9a;border-radius:50%;background:radial-gradient(circle at 40% 40%,#fff 40%,#e4e4e4)"></div>
<div class="btn" style="left:958px;top:788px;width:29px;height:21px;line-height:20px;">Tx4</div>
<div class="inp blu" style="left:665px;top:811px;width:272px;height:21px;line-height:19px;padding-left:6px;font-size:12px;letter-spacing:-.1px">R3KEE 73</div>
<div class="a" style="left:942px;top:815px;width:12px;height:12px;border:1px solid #9a9a9a;border-radius:50%;background:radial-gradient(circle at 40% 40%,#fff 40%,#e4e4e4)"></div>
<div class="btn" style="left:958px;top:811px;width:29px;height:21px;line-height:20px;">Tx5</div>
<div class="inp blu" style="left:665px;top:834px;width:272px;height:21px;line-height:19px;padding-left:3px;background:#ffd0d0;font-size:12px;letter-spacing:-.1px">CQ R3KEE KO91</div>
<div class="a" style="left:942px;top:838px;width:12px;height:12px;border:1px solid #9a9a9a;border-radius:50%;background:radial-gradient(circle at 40% 40%,#fff 40%,#e4e4e4)"></div><div class="a" style="left:945px;top:841px;width:6px;height:6px;border-radius:50%;background:#000"></div>
<div class="btn" style="left:958px;top:834px;width:29px;height:21px;line-height:20px;">Tx6</div>
<div class="inp blu" style="left:665px;top:857px;width:272px;height:21px;line-height:19px;padding-left:3px;font-size:12px;letter-spacing:-.1px">CQ 351 R3KEE</div>
<div class="a" style="left:942px;top:861px;width:12px;height:12px;border:1px solid #9a9a9a;border-radius:50%;background:radial-gradient(circle at 40% 40%,#fff 40%,#e4e4e4)"></div>
<div class="btn" style="left:958px;top:857px;width:29px;height:21px;line-height:20px;">Tx7</div>
<div class="t" style="left:991px;top:721px">TX</div>
<div class="t" style="left:989px;top:736px;font-size:9px;-webkit-text-stroke:.3px #a00000;color:#a00000;letter-spacing:-.35px">MAX</div>
<div class="a" style="left:990px;top:747px;width:17px;height:118px;background:#ece9d8;border:1px solid #c4c0ae"></div><svg class="a" style="left:0;top:0" width="1017" height="887" shape-rendering="crispEdges"><rect x="997" y="752" width="3" height="108" fill="#fdfdfb"/><rect x="997" y="752" width="1" height="108" fill="#9a978e"/><rect x="999" y="752" width="1" height="108" fill="#b8b5aa"/><rect x="997" y="752" width="3" height="1" fill="#9a978e"/><rect x="991" y="758" width="5" height="1" fill="#000"/><rect x="1001" y="758" width="5" height="1" fill="#000"/><rect x="991" y="764" width="5" height="1" fill="#000"/><rect x="1001" y="764" width="5" height="1" fill="#000"/><rect x="991" y="770" width="5" height="1" fill="#000"/><rect x="1001" y="770" width="5" height="1" fill="#000"/><rect x="991" y="776" width="5" height="1" fill="#000"/><rect x="1001" y="776" width="5" height="1" fill="#000"/><rect x="991" y="782" width="5" height="1" fill="#000"/><rect x="1001" y="782" width="5" height="1" fill="#000"/><rect x="991" y="788" width="5" height="1" fill="#000"/><rect x="1001" y="788" width="5" height="1" fill="#000"/><rect x="991" y="794" width="5" height="1" fill="#000"/><rect x="1001" y="794" width="5" height="1" fill="#000"/><rect x="991" y="800" width="5" height="1" fill="#000"/><rect x="1001" y="800" width="5" height="1" fill="#000"/><rect x="991" y="806" width="5" height="1" fill="#000"/><rect x="1001" y="806" width="5" height="1" fill="#000"/><rect x="991" y="812" width="5" height="1" fill="#000"/><rect x="1001" y="812" width="5" height="1" fill="#000"/><rect x="991" y="818" width="5" height="1" fill="#000"/><rect x="1001" y="818" width="5" height="1" fill="#000"/><rect x="991" y="824" width="5" height="1" fill="#000"/><rect x="1001" y="824" width="5" height="1" fill="#000"/><rect x="991" y="830" width="5" height="1" fill="#000"/><rect x="1001" y="830" width="5" height="1" fill="#000"/><rect x="991" y="836" width="5" height="1" fill="#000"/><rect x="1001" y="836" width="5" height="1" fill="#000"/><rect x="991" y="842" width="5" height="1" fill="#000"/><rect x="1001" y="842" width="5" height="1" fill="#000"/><rect x="991" y="848" width="5" height="1" fill="#000"/><rect x="1001" y="848" width="5" height="1" fill="#000"/><rect x="991" y="854" width="5" height="1" fill="#000"/><rect x="1001" y="854" width="5" height="1" fill="#000"/><rect x="993" y="798" width="11" height="9" rx="1" fill="#c6c6c6" stroke="#8a8a8a" stroke-width="1"/><rect x="995" y="800" width="7" height="4" fill="#108010"/></svg>
<div class="t" style="left:990px;top:868px;font-size:9px;-webkit-text-stroke:.3px #0000c8;color:#0000c8;letter-spacing:.1px">MIN</div>
</body></html>
